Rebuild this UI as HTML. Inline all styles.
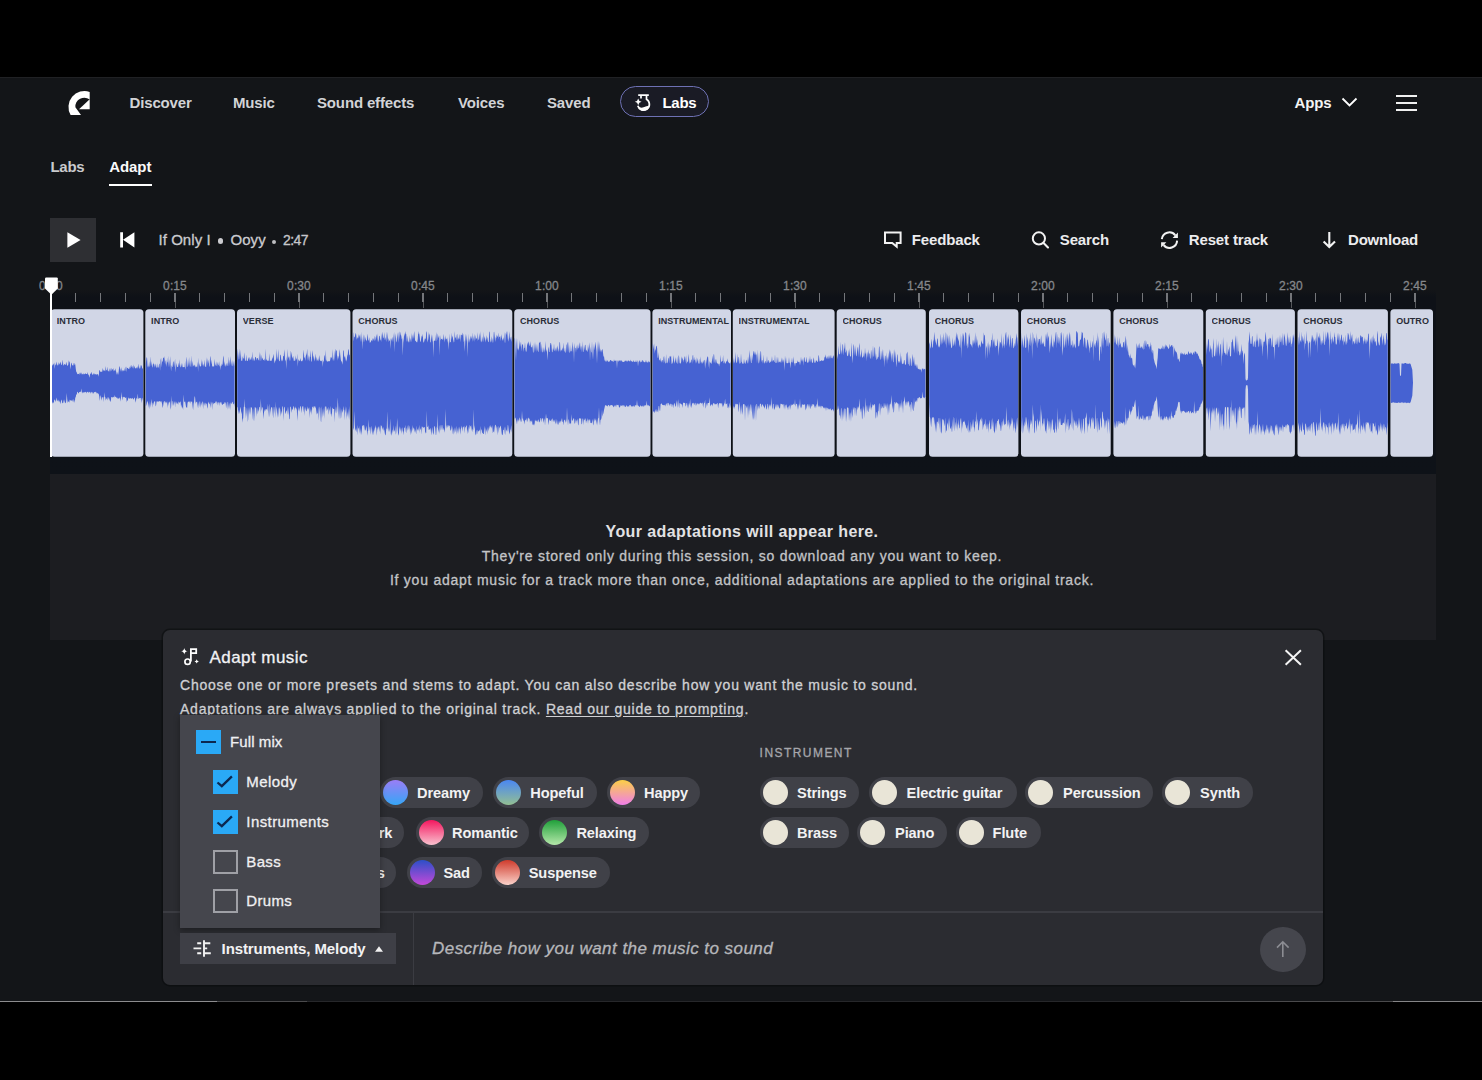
<!DOCTYPE html>
<html><head><meta charset="utf-8"><style>
html,body{margin:0;padding:0;width:1482px;height:1080px;overflow:hidden;background:#000}
body{position:relative;font-family:"Liberation Sans",sans-serif}
.screen{position:absolute;left:0;top:77px;width:1482px;height:924px;background:#131518}
.t{position:absolute;white-space:nowrap}
.m{-webkit-text-stroke:0.3px currentColor}
</style></head><body>
<div class="screen"></div><div style="position:absolute;left:0;top:77px;width:1482px;height:1px;background:#202124"></div><svg style="position:absolute;left:60px;top:85px" width="40" height="35" viewBox="0 0 40 35">
<path fill="#fff" d="M29.7 6.9 A16 16 0 0 0 10.6 30 L21 30 L15.4 22.3 A9 9 0 0 1 29.7 14.5 Z"/>
<path fill="#fff" d="M29.7 14.2 L19 24.2 L29.7 24.2 Z"/>
</svg><div class="t" style="left:129.5px;top:94.70px;font-size:15px;line-height:15px;font-weight:700;color:#d2d3d6;letter-spacing:-0.15px;font-style:normal;">Discover</div><div class="t" style="left:233px;top:94.70px;font-size:15px;line-height:15px;font-weight:700;color:#d2d3d6;letter-spacing:-0.15px;font-style:normal;">Music</div><div class="t" style="left:317px;top:94.70px;font-size:15px;line-height:15px;font-weight:700;color:#d2d3d6;letter-spacing:-0.15px;font-style:normal;">Sound effects</div><div class="t" style="left:458px;top:94.70px;font-size:15px;line-height:15px;font-weight:700;color:#d2d3d6;letter-spacing:-0.15px;font-style:normal;">Voices</div><div class="t" style="left:547px;top:94.70px;font-size:15px;line-height:15px;font-weight:700;color:#d2d3d6;letter-spacing:-0.15px;font-style:normal;">Saved</div><div style="position:absolute;left:619.5px;top:86.4px;width:87px;height:28.6px;border:1.7px solid #6e71b4;border-radius:17px;background:#1a1b25"></div><svg style="position:absolute;left:630px;top:90px" width="26" height="26" viewBox="0 0 26 26">
<path fill="none" stroke="#fff" stroke-width="1.7" d="M8.2 5.2 H18.8 M11 5.2 V8.4 M16.5 5.2 V9.2 A5.9 5.9 0 1 1 7.8 15.8"/>
<path fill="#fff" d="M7.8 15.9 Q10.5 18.4 13.5 17.3 Q16.5 16.2 19.4 15.8 A5.9 5.9 0 0 1 7.8 15.9 Z"/>
<path fill="#fff" d="M8.2 8.4 Q8.7 11.3 11.6 11.8 Q8.7 12.3 8.2 15.2 Q7.7 12.3 4.8 11.8 Q7.7 11.3 8.2 8.4 Z"/>
</svg><div class="t" style="left:662.5px;top:94.70px;font-size:15px;line-height:15px;font-weight:700;color:#fff;letter-spacing:-0.3px;font-style:normal;">Labs</div><div class="t" style="left:1294.5px;top:94.70px;font-size:15px;line-height:15px;font-weight:700;color:#f4f4f4;letter-spacing:-0.1px;font-style:normal;">Apps</div><svg style="position:absolute;left:1340px;top:95px" width="20" height="14" viewBox="0 0 20 14">
<path fill="none" stroke="#fff" stroke-width="1.8" d="M2.5 3.5 L9.5 10.5 L16.5 3.5"/></svg><div style="position:absolute;left:1395.5px;top:95.2px;width:21px;height:2px;background:#f0f0f0"></div><div style="position:absolute;left:1395.5px;top:102.2px;width:21px;height:2px;background:#f0f0f0"></div><div style="position:absolute;left:1395.5px;top:109.0px;width:21px;height:2px;background:#f0f0f0"></div><div class="t" style="left:50.5px;top:158.80px;font-size:15px;line-height:15px;font-weight:700;color:#c9cacd;letter-spacing:-0.3px;font-style:normal;">Labs</div><div class="t" style="left:109.3px;top:158.80px;font-size:15px;line-height:15px;font-weight:700;color:#fafafa;letter-spacing:-0.1px;font-style:normal;">Adapt</div><div style="position:absolute;left:109px;top:184px;width:43px;height:2.2px;background:#fff"></div><div style="position:absolute;left:50px;top:218px;width:46px;height:44px;background:#2e2f33"></div><svg style="position:absolute;left:60px;top:226px" width="28" height="28" viewBox="0 0 28 28">
<path fill="#fff" d="M7.4 6.3 L20.6 14 L7.4 21.8 Z"/></svg><svg style="position:absolute;left:112px;top:226px" width="28" height="28" viewBox="0 0 28 28">
<path fill="#fff" d="M8.2 6.3 H11 V21.4 H8.2 Z M11 13.85 L22.4 6.3 V21.4 Z"/></svg><div class="t m" style="left:158.5px;top:231.90px;font-size:15px;line-height:15px;font-weight:400;color:#cbcbcf;letter-spacing:0.05px;font-style:normal;">If Only I</div><div style="position:absolute;left:217.5px;top:238px;width:5.5px;height:5.5px;border-radius:50%;background:#cbcbcf"></div><div class="t m" style="left:230.5px;top:231.90px;font-size:15px;line-height:15px;font-weight:400;color:#cbcbcf;letter-spacing:0.05px;font-style:normal;">Ooyy</div><div style="position:absolute;left:271.5px;top:239.5px;width:4.5px;height:4.5px;border-radius:50%;background:#bdbdc1"></div><div class="t m" style="left:283px;top:232.95px;font-size:14px;line-height:14px;font-weight:400;color:#c6c6ca;letter-spacing:-0.6px;font-style:normal;">2:47</div><svg style="position:absolute;left:878px;top:226px" width="28" height="28" viewBox="0 0 28 28">
<path fill="none" stroke="#f2f2f2" stroke-width="2" stroke-linejoin="miter" d="M7 6.4 H22.6 V16.9 H18.7 V20.6 L14.2 16.9 H7 Z"/></svg><div class="t" style="left:911.8px;top:232.30px;font-size:15px;line-height:15px;font-weight:700;color:#ececee;letter-spacing:-0.15px;font-style:normal;">Feedback</div><svg style="position:absolute;left:1026px;top:226px" width="28" height="28" viewBox="0 0 28 28">
<circle cx="12.9" cy="12.4" r="6.1" fill="none" stroke="#f2f2f2" stroke-width="2"/>
<path d="M17.3 16.8 L22 21.5" stroke="#f2f2f2" stroke-width="2.1" stroke-linecap="round"/></svg><div class="t" style="left:1059.8px;top:232.30px;font-size:15px;line-height:15px;font-weight:700;color:#ececee;letter-spacing:-0.15px;font-style:normal;">Search</div><svg style="position:absolute;left:1155px;top:226px" width="28" height="28" viewBox="0 0 28 28">
<path fill="none" stroke="#f2f2f2" stroke-width="2" d="M6.8 13.2 A7.6 7.6 0 0 1 20.3 9.3 M22.1 14.6 A7.6 7.6 0 0 1 8.6 19"/>
<path fill="#f2f2f2" d="M22.9 6.6 V11.9 H17.6 Z M6.1 21.6 V16.3 H11.4 Z"/></svg><div class="t" style="left:1188.8px;top:232.30px;font-size:15px;line-height:15px;font-weight:700;color:#ececee;letter-spacing:-0.15px;font-style:normal;">Reset track</div><svg style="position:absolute;left:1315px;top:226px" width="28" height="28" viewBox="0 0 28 28">
<path fill="none" stroke="#f2f2f2" d="M14.3 6 V21 M8.6 15.4 L14.3 21.1 L20 15.4" stroke-width="2.1"/></svg><div class="t" style="left:1348px;top:232.30px;font-size:15px;line-height:15px;font-weight:700;color:#ececee;letter-spacing:-0.2px;font-style:normal;">Download</div><div style="position:absolute;left:50px;top:290px;width:1386px;height:184px;background:linear-gradient(180deg,#131518 0px,#0e1117 7px,#0e1218 100%)"></div><div class="t m" style="left:-449.0px;width:1000px;text-align:center;top:280.14px;font-size:12px;line-height:12px;font-weight:400;color:#85878b;letter-spacing:0.1px;">0:00</div><div class="t m" style="left:-325.0px;width:1000px;text-align:center;top:280.14px;font-size:12px;line-height:12px;font-weight:400;color:#85878b;letter-spacing:0.1px;">0:15</div><div class="t m" style="left:-201.0px;width:1000px;text-align:center;top:280.14px;font-size:12px;line-height:12px;font-weight:400;color:#85878b;letter-spacing:0.1px;">0:30</div><div class="t m" style="left:-77.0px;width:1000px;text-align:center;top:280.14px;font-size:12px;line-height:12px;font-weight:400;color:#85878b;letter-spacing:0.1px;">0:45</div><div class="t m" style="left:47.0px;width:1000px;text-align:center;top:280.14px;font-size:12px;line-height:12px;font-weight:400;color:#85878b;letter-spacing:0.1px;">1:00</div><div class="t m" style="left:171.0px;width:1000px;text-align:center;top:280.14px;font-size:12px;line-height:12px;font-weight:400;color:#85878b;letter-spacing:0.1px;">1:15</div><div class="t m" style="left:295.0px;width:1000px;text-align:center;top:280.14px;font-size:12px;line-height:12px;font-weight:400;color:#85878b;letter-spacing:0.1px;">1:30</div><div class="t m" style="left:419.0px;width:1000px;text-align:center;top:280.14px;font-size:12px;line-height:12px;font-weight:400;color:#85878b;letter-spacing:0.1px;">1:45</div><div class="t m" style="left:543.0px;width:1000px;text-align:center;top:280.14px;font-size:12px;line-height:12px;font-weight:400;color:#85878b;letter-spacing:0.1px;">2:00</div><div class="t m" style="left:667.0px;width:1000px;text-align:center;top:280.14px;font-size:12px;line-height:12px;font-weight:400;color:#85878b;letter-spacing:0.1px;">2:15</div><div class="t m" style="left:791.0px;width:1000px;text-align:center;top:280.14px;font-size:12px;line-height:12px;font-weight:400;color:#85878b;letter-spacing:0.1px;">2:30</div><div class="t m" style="left:915.0px;width:1000px;text-align:center;top:280.14px;font-size:12px;line-height:12px;font-weight:400;color:#85878b;letter-spacing:0.1px;">2:45</div><div style="position:absolute;left:50.35px;top:293px;width:1.3px;height:9px;background:#74767a"></div><div style="position:absolute;left:50.50px;top:302px;width:1px;height:6px;background:#55575b"></div><div style="position:absolute;left:75.15px;top:293px;width:1.3px;height:9px;background:#74767a"></div><div style="position:absolute;left:99.95px;top:293px;width:1.3px;height:9px;background:#74767a"></div><div style="position:absolute;left:124.75px;top:293px;width:1.3px;height:9px;background:#74767a"></div><div style="position:absolute;left:149.55px;top:293px;width:1.3px;height:9px;background:#74767a"></div><div style="position:absolute;left:174.35px;top:293px;width:1.3px;height:9px;background:#74767a"></div><div style="position:absolute;left:174.50px;top:302px;width:1px;height:6px;background:#55575b"></div><div style="position:absolute;left:199.15px;top:293px;width:1.3px;height:9px;background:#74767a"></div><div style="position:absolute;left:223.95px;top:293px;width:1.3px;height:9px;background:#74767a"></div><div style="position:absolute;left:248.75px;top:293px;width:1.3px;height:9px;background:#74767a"></div><div style="position:absolute;left:273.55px;top:293px;width:1.3px;height:9px;background:#74767a"></div><div style="position:absolute;left:298.35px;top:293px;width:1.3px;height:9px;background:#74767a"></div><div style="position:absolute;left:298.50px;top:302px;width:1px;height:6px;background:#55575b"></div><div style="position:absolute;left:323.15px;top:293px;width:1.3px;height:9px;background:#74767a"></div><div style="position:absolute;left:347.95px;top:293px;width:1.3px;height:9px;background:#74767a"></div><div style="position:absolute;left:372.75px;top:293px;width:1.3px;height:9px;background:#74767a"></div><div style="position:absolute;left:397.55px;top:293px;width:1.3px;height:9px;background:#74767a"></div><div style="position:absolute;left:422.35px;top:293px;width:1.3px;height:9px;background:#74767a"></div><div style="position:absolute;left:422.50px;top:302px;width:1px;height:6px;background:#55575b"></div><div style="position:absolute;left:447.15px;top:293px;width:1.3px;height:9px;background:#74767a"></div><div style="position:absolute;left:471.95px;top:293px;width:1.3px;height:9px;background:#74767a"></div><div style="position:absolute;left:496.75px;top:293px;width:1.3px;height:9px;background:#74767a"></div><div style="position:absolute;left:521.55px;top:293px;width:1.3px;height:9px;background:#74767a"></div><div style="position:absolute;left:546.35px;top:293px;width:1.3px;height:9px;background:#74767a"></div><div style="position:absolute;left:546.50px;top:302px;width:1px;height:6px;background:#55575b"></div><div style="position:absolute;left:571.15px;top:293px;width:1.3px;height:9px;background:#74767a"></div><div style="position:absolute;left:595.95px;top:293px;width:1.3px;height:9px;background:#74767a"></div><div style="position:absolute;left:620.75px;top:293px;width:1.3px;height:9px;background:#74767a"></div><div style="position:absolute;left:645.55px;top:293px;width:1.3px;height:9px;background:#74767a"></div><div style="position:absolute;left:670.35px;top:293px;width:1.3px;height:9px;background:#74767a"></div><div style="position:absolute;left:670.50px;top:302px;width:1px;height:6px;background:#55575b"></div><div style="position:absolute;left:695.15px;top:293px;width:1.3px;height:9px;background:#74767a"></div><div style="position:absolute;left:719.95px;top:293px;width:1.3px;height:9px;background:#74767a"></div><div style="position:absolute;left:744.75px;top:293px;width:1.3px;height:9px;background:#74767a"></div><div style="position:absolute;left:769.55px;top:293px;width:1.3px;height:9px;background:#74767a"></div><div style="position:absolute;left:794.35px;top:293px;width:1.3px;height:9px;background:#74767a"></div><div style="position:absolute;left:794.50px;top:302px;width:1px;height:6px;background:#55575b"></div><div style="position:absolute;left:819.15px;top:293px;width:1.3px;height:9px;background:#74767a"></div><div style="position:absolute;left:843.95px;top:293px;width:1.3px;height:9px;background:#74767a"></div><div style="position:absolute;left:868.75px;top:293px;width:1.3px;height:9px;background:#74767a"></div><div style="position:absolute;left:893.55px;top:293px;width:1.3px;height:9px;background:#74767a"></div><div style="position:absolute;left:918.35px;top:293px;width:1.3px;height:9px;background:#74767a"></div><div style="position:absolute;left:918.50px;top:302px;width:1px;height:6px;background:#55575b"></div><div style="position:absolute;left:943.15px;top:293px;width:1.3px;height:9px;background:#74767a"></div><div style="position:absolute;left:967.95px;top:293px;width:1.3px;height:9px;background:#74767a"></div><div style="position:absolute;left:992.75px;top:293px;width:1.3px;height:9px;background:#74767a"></div><div style="position:absolute;left:1017.55px;top:293px;width:1.3px;height:9px;background:#74767a"></div><div style="position:absolute;left:1042.35px;top:293px;width:1.3px;height:9px;background:#74767a"></div><div style="position:absolute;left:1042.50px;top:302px;width:1px;height:6px;background:#55575b"></div><div style="position:absolute;left:1067.15px;top:293px;width:1.3px;height:9px;background:#74767a"></div><div style="position:absolute;left:1091.95px;top:293px;width:1.3px;height:9px;background:#74767a"></div><div style="position:absolute;left:1116.75px;top:293px;width:1.3px;height:9px;background:#74767a"></div><div style="position:absolute;left:1141.55px;top:293px;width:1.3px;height:9px;background:#74767a"></div><div style="position:absolute;left:1166.35px;top:293px;width:1.3px;height:9px;background:#74767a"></div><div style="position:absolute;left:1166.50px;top:302px;width:1px;height:6px;background:#55575b"></div><div style="position:absolute;left:1191.15px;top:293px;width:1.3px;height:9px;background:#74767a"></div><div style="position:absolute;left:1215.95px;top:293px;width:1.3px;height:9px;background:#74767a"></div><div style="position:absolute;left:1240.75px;top:293px;width:1.3px;height:9px;background:#74767a"></div><div style="position:absolute;left:1265.55px;top:293px;width:1.3px;height:9px;background:#74767a"></div><div style="position:absolute;left:1290.35px;top:293px;width:1.3px;height:9px;background:#74767a"></div><div style="position:absolute;left:1290.50px;top:302px;width:1px;height:6px;background:#55575b"></div><div style="position:absolute;left:1315.15px;top:293px;width:1.3px;height:9px;background:#74767a"></div><div style="position:absolute;left:1339.95px;top:293px;width:1.3px;height:9px;background:#74767a"></div><div style="position:absolute;left:1364.75px;top:293px;width:1.3px;height:9px;background:#74767a"></div><div style="position:absolute;left:1389.55px;top:293px;width:1.3px;height:9px;background:#74767a"></div><div style="position:absolute;left:1414.35px;top:293px;width:1.3px;height:9px;background:#74767a"></div><div style="position:absolute;left:1414.50px;top:302px;width:1px;height:6px;background:#55575b"></div><svg style="position:absolute;left:0;top:0" width="1482" height="1080" viewBox="0 0 1482 1080"><defs><clipPath id="c0"><rect x="51.0" y="309.3" width="92.4" height="147.4" rx="3.5"/></clipPath><clipPath id="c1"><rect x="145.3" y="309.3" width="89.7" height="147.4" rx="3.5"/></clipPath><clipPath id="c2"><rect x="237.0" y="309.3" width="113.4" height="147.4" rx="3.5"/></clipPath><clipPath id="c3"><rect x="352.5" y="309.3" width="159.8" height="147.4" rx="3.5"/></clipPath><clipPath id="c4"><rect x="514.2" y="309.3" width="136.3" height="147.4" rx="3.5"/></clipPath><clipPath id="c5"><rect x="652.4" y="309.3" width="78.6" height="147.4" rx="3.5"/></clipPath><clipPath id="c6"><rect x="732.8" y="309.3" width="101.8" height="147.4" rx="3.5"/></clipPath><clipPath id="c7"><rect x="836.7" y="309.3" width="89.1" height="147.4" rx="3.5"/></clipPath><clipPath id="c8"><rect x="929.0" y="309.3" width="89.4" height="147.4" rx="3.5"/></clipPath><clipPath id="c9"><rect x="1021.0" y="309.3" width="89.7" height="147.4" rx="3.5"/></clipPath><clipPath id="c10"><rect x="1113.4" y="309.3" width="89.9" height="147.4" rx="3.5"/></clipPath><clipPath id="c11"><rect x="1205.8" y="309.3" width="89.1" height="147.4" rx="3.5"/></clipPath><clipPath id="c12"><rect x="1297.5" y="309.3" width="90.4" height="147.4" rx="3.5"/></clipPath><clipPath id="c13"><rect x="1390.4" y="309.3" width="42.6" height="147.4" rx="3.5"/></clipPath></defs><rect x="51.0" y="309.3" width="92.4" height="147.4" rx="3.5" fill="#d1d6e6"/><path clip-path="url(#c0)" fill="#4662d2" d="M51.2,361.3 51.8,365.8 52.2,365.8 52.8,364.5 53.2,364.7 53.8,363.7 54.2,362.6 54.8,368.9 55.2,364.5 55.8,365.1 56.2,361.5 56.8,364.1 57.2,365.8 57.8,364.7 58.2,362.1 58.8,365.5 59.2,363.1 59.8,364.8 60.2,363.3 60.8,361.5 61.2,364.7 61.8,365.1 62.2,363.2 62.8,359.4 63.2,364.7 63.8,365.7 64.2,363.8 64.8,364.5 65.2,365.1 65.8,364.5 66.2,361.8 66.8,364.2 67.2,365.7 67.8,365.5 68.2,365.0 68.8,360.3 69.2,361.6 69.8,362.5 70.2,365.8 70.8,369.6 71.2,362.5 71.8,363.5 72.2,365.6 72.8,365.3 73.2,365.8 73.8,362.9 74.2,363.0 74.8,365.3 75.2,363.9 75.8,369.1 76.2,371.4 76.8,372.5 77.2,373.7 77.8,374.3 78.2,374.0 78.8,374.1 79.2,372.5 79.8,374.8 80.2,373.9 80.8,372.3 81.2,374.8 81.8,372.2 82.2,374.6 82.8,374.0 83.2,373.3 83.8,374.4 84.2,374.2 84.8,374.0 85.2,372.9 85.8,374.1 86.2,374.1 86.8,374.0 87.2,374.3 87.8,372.1 88.2,374.7 88.8,374.7 89.2,377.7 89.8,375.8 90.2,373.8 90.8,373.8 91.2,371.8 91.8,373.5 92.2,374.5 92.8,374.7 93.2,374.6 93.8,372.9 94.2,374.8 94.8,373.2 95.2,374.5 95.8,373.9 96.2,374.7 96.8,374.2 97.2,374.4 97.8,374.1 98.2,374.4 98.8,376.7 99.2,370.2 99.8,370.2 100.2,371.8 100.8,371.7 101.2,371.8 101.8,371.7 102.2,371.7 102.8,367.8 103.2,371.2 103.8,369.6 104.2,370.3 104.8,370.9 105.2,371.3 105.8,365.9 106.2,370.1 106.8,370.3 107.2,371.0 107.8,366.4 108.2,371.8 108.8,370.8 109.2,371.8 109.8,367.9 110.2,371.8 110.8,368.4 111.2,368.1 111.8,371.2 112.2,369.5 112.8,369.3 113.2,368.0 113.8,371.5 114.2,370.0 114.8,370.9 115.2,368.2 115.8,370.8 116.2,371.7 116.8,374.5 117.2,374.5 117.8,371.8 118.2,374.9 118.8,370.4 119.2,366.1 119.8,367.2 120.2,371.8 120.8,368.0 121.2,371.8 121.8,366.9 122.2,371.8 122.8,370.1 123.2,370.1 123.8,371.2 124.2,371.0 124.8,368.8 125.2,366.6 125.8,370.8 126.2,371.8 126.8,366.6 127.2,368.0 127.8,367.9 128.2,368.7 128.8,368.8 129.2,369.3 129.8,366.5 130.2,368.6 130.8,365.7 131.2,364.9 131.8,367.5 132.2,365.8 132.8,368.6 133.2,364.2 133.8,368.7 134.2,367.5 134.8,365.8 135.2,368.8 135.8,367.9 136.2,368.6 136.8,367.3 137.2,366.3 137.8,368.7 138.2,367.2 138.8,363.5 139.2,368.8 139.8,368.3 140.2,364.6 140.8,368.8 141.2,366.1 141.8,365.1 142.2,368.8 142.8,368.1 143.2,371.3 143.2,393.6 142.8,400.9 142.2,397.8 141.8,398.4 141.2,403.3 140.8,398.3 140.2,397.8 139.8,398.6 139.2,397.8 138.8,398.8 138.2,398.6 137.8,393.5 137.2,399.2 136.8,397.8 136.2,399.3 135.8,402.8 135.2,400.3 134.8,397.8 134.2,397.8 133.8,399.3 133.2,399.4 132.8,397.8 132.2,398.6 131.8,398.2 131.2,399.1 130.8,397.9 130.2,398.4 129.8,398.1 129.2,399.1 128.8,398.6 128.2,397.2 127.8,401.3 127.2,400.0 126.8,402.6 126.2,396.9 125.8,397.9 125.2,397.7 124.8,396.8 124.2,397.6 123.8,396.8 123.2,396.9 122.8,400.6 122.2,396.8 121.8,397.0 121.2,392.0 120.8,401.8 120.2,398.8 119.8,397.2 119.2,398.5 118.8,399.2 118.2,397.8 117.8,399.0 117.2,397.6 116.8,397.7 116.2,397.5 115.8,396.8 115.2,396.8 114.8,397.6 114.2,395.1 113.8,397.3 113.2,397.1 112.8,397.7 112.2,397.0 111.8,397.0 111.2,397.2 110.8,402.0 110.2,401.0 109.8,398.1 109.2,401.3 108.8,396.8 108.2,398.7 107.8,400.5 107.2,396.8 106.8,399.5 106.2,398.0 105.8,400.7 105.2,397.0 104.8,397.1 104.2,392.3 103.8,402.2 103.2,396.8 102.8,397.5 102.2,396.9 101.8,400.7 101.2,397.8 100.8,395.0 100.2,397.2 99.8,401.0 99.2,395.9 98.8,394.2 98.2,393.5 97.8,393.5 97.2,392.9 96.8,392.0 96.2,393.7 95.8,392.0 95.2,391.8 94.8,391.9 94.2,392.3 93.8,392.5 93.2,393.8 92.8,393.4 92.2,391.8 91.8,392.7 91.2,391.8 90.8,392.0 90.2,393.7 89.8,391.9 89.2,391.8 88.8,393.2 88.2,391.8 87.8,391.9 87.2,391.8 86.8,392.0 86.2,393.4 85.8,391.8 85.2,392.0 84.8,392.5 84.2,392.1 83.8,393.0 83.2,392.0 82.8,392.1 82.2,393.6 81.8,391.9 81.2,388.6 80.8,392.1 80.2,391.8 79.8,391.9 79.2,392.1 78.8,393.6 78.2,393.0 77.8,392.0 77.2,391.8 76.8,394.6 76.2,394.6 75.8,396.7 75.2,398.1 74.8,403.1 74.2,400.3 73.8,398.9 73.2,402.6 72.8,399.2 72.2,401.7 71.8,400.5 71.2,400.5 70.8,400.2 70.2,400.4 69.8,399.5 69.2,402.8 68.8,401.6 68.2,401.4 67.8,403.0 67.2,399.3 66.8,393.1 66.2,400.9 65.8,402.9 65.2,403.2 64.8,399.2 64.2,403.0 63.8,399.6 63.2,403.0 62.8,402.7 62.2,403.6 61.8,399.4 61.2,400.5 60.8,401.9 60.2,404.3 59.8,400.2 59.2,402.6 58.8,399.5 58.2,401.8 57.8,401.1 57.2,400.2 56.8,397.6 56.2,400.1 55.8,402.0 55.2,400.2 54.8,399.6 54.2,399.9 53.8,403.6 53.2,402.0 52.8,403.8 52.2,401.9 51.8,400.6 51.2,401.1Z"/><rect x="145.3" y="309.3" width="89.7" height="147.4" rx="3.5" fill="#d1d6e6"/><path clip-path="url(#c1)" fill="#4662d2" d="M145.6,363.9 146.1,361.3 146.6,357.1 147.1,358.2 147.6,367.5 148.1,365.5 148.6,367.8 149.1,361.2 149.6,367.1 150.1,365.9 150.6,356.3 151.1,365.9 151.6,361.1 152.1,367.7 152.6,366.5 153.1,362.6 153.6,364.5 154.1,363.7 154.6,367.7 155.1,363.4 155.6,365.3 156.1,367.6 156.6,367.7 157.1,363.3 157.6,367.4 158.1,367.5 158.6,367.6 159.1,363.5 159.6,364.2 160.1,370.7 160.6,360.1 161.1,357.8 161.6,367.6 162.1,361.0 162.6,362.1 163.1,358.1 163.6,358.0 164.1,356.3 164.6,359.4 165.1,364.7 165.6,361.1 166.1,359.9 166.6,367.0 167.1,362.5 167.6,361.7 168.1,356.0 168.6,367.5 169.1,359.6 169.6,367.2 170.1,356.0 170.6,364.7 171.1,371.5 171.6,365.1 172.1,367.3 172.6,366.4 173.1,360.9 173.6,362.2 174.1,367.3 174.6,363.0 175.1,358.7 175.6,372.6 176.1,367.1 176.6,362.8 177.1,366.8 177.6,367.1 178.1,367.0 178.6,362.5 179.1,366.3 179.6,359.3 180.1,367.2 180.6,367.2 181.1,362.7 181.6,366.9 182.1,363.3 182.6,367.3 183.1,367.1 183.6,367.3 184.1,367.0 184.6,367.3 185.1,360.8 185.6,370.0 186.1,366.9 186.6,356.6 187.1,360.6 187.6,367.2 188.1,365.7 188.6,362.4 189.1,357.0 189.6,366.9 190.1,359.9 190.6,365.9 191.1,367.3 191.6,355.3 192.1,367.2 192.6,360.8 193.1,364.7 193.6,366.1 194.1,366.5 194.6,364.6 195.1,365.5 195.6,367.2 196.1,367.2 196.6,366.3 197.1,367.1 197.6,361.6 198.1,372.0 198.6,357.4 199.1,366.8 199.6,363.0 200.1,367.0 200.6,366.0 201.1,366.3 201.6,359.1 202.1,365.9 202.6,360.3 203.1,366.9 203.6,363.7 204.1,366.5 204.6,359.6 205.1,365.9 205.6,367.0 206.1,367.0 206.6,357.1 207.1,366.1 207.6,358.0 208.1,363.4 208.6,359.4 209.1,365.8 209.6,367.1 210.1,355.8 210.6,358.1 211.1,364.2 211.6,359.6 212.1,365.7 212.6,366.6 213.1,366.9 213.6,366.1 214.1,366.4 214.6,358.8 215.1,364.6 215.6,366.0 216.1,361.3 216.6,365.4 217.1,366.4 217.6,361.7 218.1,365.5 218.6,364.8 219.1,361.3 219.6,366.7 220.1,365.5 220.6,370.2 221.1,363.2 221.6,366.5 222.1,365.1 222.6,364.1 223.1,357.5 223.6,355.4 224.1,366.6 224.6,360.9 225.1,364.9 225.6,366.9 226.1,362.7 226.6,366.5 227.1,362.3 227.6,365.6 228.1,366.3 228.6,356.3 229.1,366.2 229.6,359.5 230.1,365.0 230.6,355.9 231.1,361.6 231.6,366.4 232.1,359.9 232.6,365.8 233.1,366.6 233.6,360.8 234.1,366.0 234.6,360.2 234.6,407.3 234.1,403.1 233.6,404.3 233.1,404.2 232.6,401.8 232.1,401.9 231.6,403.4 231.1,404.0 230.6,402.3 230.1,410.1 229.6,406.2 229.1,402.7 228.6,409.2 228.1,402.3 227.6,401.7 227.1,410.0 226.6,401.9 226.1,408.6 225.6,401.7 225.1,403.2 224.6,401.7 224.1,404.2 223.6,403.7 223.1,403.8 222.6,404.7 222.1,404.9 221.6,403.4 221.1,401.7 220.6,401.9 220.1,403.4 219.6,401.9 219.1,406.0 218.6,401.7 218.1,402.7 217.6,402.3 217.1,405.4 216.6,401.6 216.1,401.6 215.6,401.6 215.1,403.3 214.6,403.0 214.1,403.2 213.6,404.4 213.1,402.6 212.6,402.6 212.1,409.9 211.6,401.5 211.1,403.7 210.6,408.3 210.1,401.5 209.6,404.4 209.1,403.7 208.6,402.7 208.1,401.5 207.6,408.8 207.1,406.9 206.6,403.2 206.1,404.1 205.6,402.6 205.1,405.9 204.6,402.2 204.1,405.9 203.6,402.0 203.1,409.2 202.6,401.8 202.1,401.5 201.6,405.7 201.1,402.3 200.6,408.0 200.1,401.4 199.6,401.6 199.1,407.0 198.6,402.0 198.1,408.4 197.6,405.5 197.1,401.6 196.6,402.5 196.1,401.5 195.6,404.1 195.1,397.5 194.6,396.0 194.1,401.4 193.6,403.7 193.1,410.2 192.6,406.5 192.1,401.4 191.6,402.0 191.1,401.3 190.6,401.6 190.1,403.8 189.6,401.5 189.1,401.6 188.6,401.4 188.1,402.1 187.6,402.5 187.1,408.1 186.6,407.3 186.1,407.6 185.6,404.0 185.1,401.3 184.6,402.3 184.1,401.3 183.6,394.5 183.1,409.9 182.6,407.4 182.1,407.6 181.6,404.3 181.1,408.1 180.6,401.2 180.1,402.0 179.6,403.1 179.1,402.1 178.6,401.4 178.1,404.9 177.6,402.5 177.1,404.3 176.6,401.5 176.1,404.2 175.6,401.1 175.1,407.4 174.6,401.1 174.1,403.1 173.6,406.0 173.1,401.4 172.6,401.1 172.1,406.2 171.6,395.7 171.1,407.3 170.6,409.8 170.1,401.1 169.6,403.1 169.1,401.2 168.6,406.0 168.1,401.5 167.6,408.2 167.1,401.2 166.6,403.5 166.1,401.6 165.6,401.7 165.1,403.5 164.6,401.2 164.1,401.1 163.6,402.4 163.1,405.9 162.6,407.9 162.1,404.0 161.6,402.1 161.1,401.0 160.6,401.2 160.1,402.3 159.6,401.0 159.1,401.0 158.6,401.9 158.1,401.3 157.6,401.8 157.1,401.2 156.6,401.5 156.1,405.3 155.6,406.4 155.1,401.2 154.6,401.8 154.1,400.9 153.6,405.3 153.1,402.3 152.6,403.4 152.1,407.7 151.6,399.0 151.1,402.2 150.6,407.8 150.1,401.7 149.6,409.7 149.1,400.9 148.6,408.0 148.1,403.6 147.6,401.5 147.1,401.2 146.6,403.9 146.1,405.7 145.6,406.1Z"/><rect x="237.0" y="309.3" width="113.4" height="147.4" rx="3.5" fill="#d1d6e6"/><path clip-path="url(#c2)" fill="#4662d2" d="M237.2,358.1 237.8,348.4 238.2,353.8 238.8,359.5 239.2,359.1 239.8,348.3 240.2,359.2 240.8,349.6 241.2,360.8 241.8,360.7 242.2,360.8 242.8,356.1 243.2,358.9 243.8,357.8 244.2,352.3 244.8,358.6 245.2,360.7 245.8,360.9 246.2,354.6 246.8,360.8 247.2,360.9 247.8,360.8 248.2,358.9 248.8,357.0 249.2,360.9 249.8,356.4 250.2,360.3 250.8,359.1 251.2,356.4 251.8,360.3 252.2,351.3 252.8,360.9 253.2,357.4 253.8,360.4 254.2,360.9 254.8,359.5 255.2,356.7 255.8,357.3 256.2,358.0 256.8,360.6 257.2,358.1 257.8,358.1 258.2,359.8 258.8,360.6 259.2,351.5 259.8,360.4 260.2,360.9 260.8,352.9 261.2,361.0 261.8,354.4 262.2,359.4 262.8,357.4 263.2,360.1 263.8,359.9 264.2,360.9 264.8,358.3 265.2,360.9 265.8,348.5 266.2,360.5 266.8,359.1 267.2,361.0 267.8,360.6 268.2,360.4 268.8,360.9 269.2,353.2 269.8,361.1 270.2,360.9 270.8,360.4 271.2,361.1 271.8,360.2 272.2,356.9 272.8,359.5 273.2,353.8 273.8,356.7 274.2,361.1 274.8,363.5 275.2,361.0 275.8,360.3 276.2,358.2 276.8,348.8 277.2,360.0 277.8,356.5 278.2,349.0 278.8,359.3 279.2,361.0 279.8,361.2 280.2,355.3 280.8,354.5 281.2,359.2 281.8,361.2 282.2,361.2 282.8,359.4 283.2,356.1 283.8,356.0 284.2,349.2 284.8,355.2 285.2,361.2 285.8,359.4 286.2,369.3 286.8,356.3 287.2,360.5 287.8,348.8 288.2,358.6 288.8,356.6 289.2,356.6 289.8,360.7 290.2,360.4 290.8,350.7 291.2,352.6 291.8,355.3 292.2,358.8 292.8,356.7 293.2,356.1 293.8,361.0 294.2,360.4 294.8,361.3 295.2,355.3 295.8,361.1 296.2,357.9 296.8,360.0 297.2,353.6 297.8,366.8 298.2,361.1 298.8,359.1 299.2,361.3 299.8,360.8 300.2,358.1 300.8,360.6 301.2,361.3 301.8,361.3 302.2,359.9 302.8,361.4 303.2,355.0 303.8,349.6 304.2,357.7 304.8,357.2 305.2,361.0 305.8,356.1 306.2,354.9 306.8,353.0 307.2,348.5 307.8,361.0 308.2,354.8 308.8,359.7 309.2,361.4 309.8,356.2 310.2,357.3 310.8,350.0 311.2,361.4 311.8,361.4 312.2,354.5 312.8,350.1 313.2,359.3 313.8,355.3 314.2,358.5 314.8,361.5 315.2,358.3 315.8,353.6 316.2,361.4 316.8,356.7 317.2,359.6 317.8,360.8 318.2,361.3 318.8,358.4 319.2,355.0 319.8,359.6 320.2,361.3 320.8,360.6 321.2,360.8 321.8,361.5 322.2,359.6 322.8,366.9 323.2,361.2 323.8,361.6 324.2,356.4 324.8,354.8 325.2,361.3 325.8,349.7 326.2,359.8 326.8,361.2 327.2,361.6 327.8,361.6 328.2,361.6 328.8,361.1 329.2,361.0 329.8,361.5 330.2,360.1 330.8,356.8 331.2,358.2 331.8,356.4 332.2,360.8 332.8,348.9 333.2,358.4 333.8,361.3 334.2,350.3 334.8,361.3 335.2,353.8 335.8,348.7 336.2,350.5 336.8,350.8 337.2,360.8 337.8,355.5 338.2,356.0 338.8,359.0 339.2,354.0 339.8,349.1 340.2,354.4 340.8,359.5 341.2,361.3 341.8,361.4 342.2,364.8 342.8,361.4 343.2,350.6 343.8,350.4 344.2,357.6 344.8,355.8 345.2,361.2 345.8,356.0 346.2,361.8 346.8,359.6 347.2,356.0 347.8,354.2 348.2,350.1 348.8,348.9 349.2,355.6 349.8,354.2 350.2,361.3 350.2,422.7 349.8,417.7 349.2,405.9 348.8,419.0 348.2,408.4 347.8,417.2 347.2,411.2 346.8,420.1 346.2,406.4 345.8,413.2 345.2,405.9 344.8,420.6 344.2,409.5 343.8,410.5 343.2,405.9 342.8,410.7 342.2,413.1 341.8,408.8 341.2,417.2 340.8,418.7 340.2,407.2 339.8,419.8 339.2,406.0 338.8,419.0 338.2,406.2 337.8,397.3 337.2,411.0 336.8,413.8 336.2,406.4 335.8,413.4 335.2,406.0 334.8,422.4 334.2,409.0 333.8,409.1 333.2,409.0 332.8,407.5 332.2,409.1 331.8,417.3 331.2,413.2 330.8,414.4 330.2,406.1 329.8,408.9 329.2,411.0 328.8,415.0 328.2,406.7 327.8,408.4 327.2,410.1 326.8,410.9 326.2,406.6 325.8,406.4 325.2,406.4 324.8,419.1 324.2,406.2 323.8,416.7 323.2,407.5 322.8,418.0 322.2,410.3 321.8,406.3 321.2,422.1 320.8,421.3 320.2,408.2 319.8,406.6 319.2,412.3 318.8,420.7 318.2,406.8 317.8,412.7 317.2,413.7 316.8,414.6 316.2,410.4 315.8,406.1 315.2,408.6 314.8,407.1 314.2,406.1 313.8,406.2 313.2,408.6 312.8,406.9 312.2,406.5 311.8,415.3 311.2,409.0 310.8,413.0 310.2,408.3 309.8,418.2 309.2,407.0 308.8,410.1 308.2,407.4 307.8,409.7 307.2,406.2 306.8,410.4 306.2,411.6 305.8,409.8 305.2,406.8 304.8,416.0 304.2,406.9 303.8,412.5 303.2,406.2 302.8,406.2 302.2,406.8 301.8,413.2 301.2,408.5 300.8,406.3 300.2,406.2 299.8,412.1 299.2,407.4 298.8,411.3 298.2,406.4 297.8,413.2 297.2,420.9 296.8,407.6 296.2,410.0 295.8,406.3 295.2,408.4 294.8,407.3 294.2,411.1 293.8,406.4 293.2,406.3 292.8,410.3 292.2,408.4 291.8,412.9 291.2,409.1 290.8,406.5 290.2,406.9 289.8,418.4 289.2,419.6 288.8,406.4 288.2,415.6 287.8,406.4 287.2,414.7 286.8,411.3 286.2,410.3 285.8,412.4 285.2,414.3 284.8,407.7 284.2,406.5 283.8,409.2 283.2,421.0 282.8,406.4 282.2,406.4 281.8,414.7 281.2,410.7 280.8,416.7 280.2,409.8 279.8,407.1 279.2,409.2 278.8,417.8 278.2,407.1 277.8,412.2 277.2,418.0 276.8,406.5 276.2,409.8 275.8,417.9 275.2,401.6 274.8,414.0 274.2,407.0 273.8,407.2 273.2,418.6 272.8,414.6 272.2,407.5 271.8,407.0 271.2,407.4 270.8,409.1 270.2,412.7 269.8,417.4 269.2,403.8 268.8,406.9 268.2,417.3 267.8,403.6 267.2,410.9 266.8,408.8 266.2,409.5 265.8,411.1 265.2,408.7 264.8,409.8 264.2,411.5 263.8,413.4 263.2,419.3 262.8,407.2 262.2,407.4 261.8,410.9 261.2,406.6 260.8,398.7 260.2,413.5 259.8,407.2 259.2,406.8 258.8,410.1 258.2,411.6 257.8,414.4 257.2,406.8 256.8,417.0 256.2,408.4 255.8,406.8 255.2,408.4 254.8,406.7 254.2,422.0 253.8,407.8 253.2,420.9 252.8,418.5 252.2,409.7 251.8,406.8 251.2,408.1 250.8,406.9 250.2,414.9 249.8,406.9 249.2,414.7 248.8,407.3 248.2,419.2 247.8,422.1 247.2,407.2 246.8,417.1 246.2,408.5 245.8,406.7 245.2,418.9 244.8,398.8 244.2,406.9 243.8,406.7 243.2,418.2 242.8,418.7 242.2,422.8 241.8,411.1 241.2,414.3 240.8,406.8 240.2,408.8 239.8,410.7 239.2,414.1 238.8,409.5 238.2,414.5 237.8,407.7 237.2,406.8Z"/><rect x="352.5" y="309.3" width="159.8" height="147.4" rx="3.5" fill="#d1d6e6"/><path clip-path="url(#c3)" fill="#4662d2" d="M352.8,333.5 353.2,332.6 353.8,341.6 354.2,336.6 354.8,337.2 355.2,334.8 355.8,332.7 356.2,334.8 356.8,340.1 357.2,336.9 357.8,338.9 358.2,333.8 358.8,338.6 359.2,336.5 359.8,334.5 360.2,341.9 360.8,333.5 361.2,342.3 361.8,331.4 362.2,349.7 362.8,339.1 363.2,334.1 363.8,342.5 364.2,334.4 364.8,342.3 365.2,336.8 365.8,339.7 366.2,340.1 366.8,341.6 367.2,337.4 367.8,333.6 368.2,339.7 368.8,341.0 369.2,337.1 369.8,342.7 370.2,342.4 370.8,342.1 371.2,340.1 371.8,341.1 372.2,337.8 372.8,341.6 373.2,340.1 373.8,338.1 374.2,341.6 374.8,336.0 375.2,337.1 375.8,340.8 376.2,337.1 376.8,334.0 377.2,342.1 377.8,333.2 378.2,340.0 378.8,342.3 379.2,336.0 379.8,335.8 380.2,339.6 380.8,340.7 381.2,333.0 381.8,342.3 382.2,336.0 382.8,331.6 383.2,338.5 383.8,337.2 384.2,332.0 384.8,340.5 385.2,337.3 385.8,340.5 386.2,331.3 386.8,342.0 387.2,339.0 387.8,331.7 388.2,342.5 388.8,338.0 389.2,340.7 389.8,340.8 390.2,338.1 390.8,349.0 391.2,337.7 391.8,340.9 392.2,336.6 392.8,342.1 393.2,333.1 393.8,342.5 394.2,331.2 394.8,352.2 395.2,339.1 395.8,333.3 396.2,341.0 396.8,342.6 397.2,332.2 397.8,337.8 398.2,342.7 398.8,333.0 399.2,331.2 399.8,339.3 400.2,331.4 400.8,335.3 401.2,335.6 401.8,339.6 402.2,338.0 402.8,355.8 403.2,342.7 403.8,338.5 404.2,332.8 404.8,336.7 405.2,330.9 405.8,334.2 406.2,333.9 406.8,341.6 407.2,341.4 407.8,335.5 408.2,342.7 408.8,340.9 409.2,342.4 409.8,334.9 410.2,342.3 410.8,337.7 411.2,342.6 411.8,332.8 412.2,339.8 412.8,334.3 413.2,339.0 413.8,334.4 414.2,330.9 414.8,337.6 415.2,341.1 415.8,340.8 416.2,342.6 416.8,341.5 417.2,342.4 417.8,338.8 418.2,331.0 418.8,334.5 419.2,333.3 419.8,337.4 420.2,342.1 420.8,341.2 421.2,338.3 421.8,335.4 422.2,337.1 422.8,333.8 423.2,342.3 423.8,342.4 424.2,338.0 424.8,341.9 425.2,338.2 425.8,339.0 426.2,331.1 426.8,332.8 427.2,342.6 427.8,339.9 428.2,331.6 428.8,340.5 429.2,335.2 429.8,333.3 430.2,341.8 430.8,342.7 431.2,334.0 431.8,338.7 432.2,341.9 432.8,334.2 433.2,357.2 433.8,341.5 434.2,340.3 434.8,340.9 435.2,340.9 435.8,336.7 436.2,331.9 436.8,341.5 437.2,339.6 437.8,333.5 438.2,336.1 438.8,338.2 439.2,335.3 439.8,355.5 440.2,335.0 440.8,340.5 441.2,338.8 441.8,339.0 442.2,338.6 442.8,340.3 443.2,339.2 443.8,333.8 444.2,338.4 444.8,342.5 445.2,335.3 445.8,339.8 446.2,338.4 446.8,339.1 447.2,342.7 447.8,337.0 448.2,342.8 448.8,350.0 449.2,333.2 449.8,342.7 450.2,341.9 450.8,342.3 451.2,332.4 451.8,340.0 452.2,335.4 452.8,337.5 453.2,339.8 453.8,342.5 454.2,342.1 454.8,331.1 455.2,337.5 455.8,337.6 456.2,340.2 456.8,335.0 457.2,333.7 457.8,340.6 458.2,337.2 458.8,339.6 459.2,339.1 459.8,334.5 460.2,334.8 460.8,342.3 461.2,334.9 461.8,335.1 462.2,332.6 462.8,335.7 463.2,333.7 463.8,342.2 464.2,340.0 464.8,351.8 465.2,341.9 465.8,333.2 466.2,341.9 466.8,334.3 467.2,340.7 467.8,357.1 468.2,333.5 468.8,342.8 469.2,338.3 469.8,342.8 470.2,339.3 470.8,335.4 471.2,339.2 471.8,335.7 472.2,342.0 472.8,332.3 473.2,341.3 473.8,335.8 474.2,341.9 474.8,333.5 475.2,340.5 475.8,334.8 476.2,338.9 476.8,337.7 477.2,341.2 477.8,332.1 478.2,339.2 478.8,339.9 479.2,333.0 479.8,337.7 480.2,341.9 480.8,330.9 481.2,340.9 481.8,342.6 482.2,336.2 482.8,341.9 483.2,331.8 483.8,342.4 484.2,338.3 484.8,336.1 485.2,342.6 485.8,339.5 486.2,335.0 486.8,340.1 487.2,336.8 487.8,340.5 488.2,341.8 488.8,342.3 489.2,331.2 489.8,332.6 490.2,342.7 490.8,340.9 491.2,335.9 491.8,342.5 492.2,337.7 492.8,342.8 493.2,342.3 493.8,332.3 494.2,331.7 494.8,337.5 495.2,342.1 495.8,337.1 496.2,338.4 496.8,334.6 497.2,337.3 497.8,335.3 498.2,339.3 498.8,332.6 499.2,336.8 499.8,336.9 500.2,336.1 500.8,341.3 501.2,333.9 501.8,337.7 502.2,338.9 502.8,340.9 503.2,337.2 503.8,340.8 504.2,331.8 504.8,342.4 505.2,342.8 505.8,332.6 506.2,335.1 506.8,331.6 507.2,331.6 507.8,338.3 508.2,341.7 508.8,338.2 509.2,331.2 509.8,337.4 510.2,340.1 510.8,337.3 511.2,336.4 511.8,341.4 512.2,341.3 512.2,428.0 511.8,432.9 511.2,425.1 510.8,428.9 510.2,430.5 509.8,434.6 509.2,432.6 508.8,430.9 508.2,425.4 507.8,424.8 507.2,431.9 506.8,429.5 506.2,431.7 505.8,426.3 505.2,435.0 504.8,433.2 504.2,426.4 503.8,430.1 503.2,429.9 502.8,434.3 502.2,435.3 501.8,434.3 501.2,428.9 500.8,425.6 500.2,426.4 499.8,427.3 499.2,428.5 498.8,433.3 498.2,425.9 497.8,427.0 497.2,435.5 496.8,428.8 496.2,426.2 495.8,424.8 495.2,424.9 494.8,433.3 494.2,425.3 493.8,431.5 493.2,431.9 492.8,433.3 492.2,424.9 491.8,428.8 491.2,426.3 490.8,427.6 490.2,424.8 489.8,429.3 489.2,425.4 488.8,428.0 488.2,431.4 487.8,427.1 487.2,434.3 486.8,429.1 486.2,432.2 485.8,426.9 485.2,435.5 484.8,431.0 484.2,425.7 483.8,434.1 483.2,434.1 482.8,433.2 482.2,432.7 481.8,429.0 481.2,430.6 480.8,435.0 480.2,426.1 479.8,431.1 479.2,430.1 478.8,431.2 478.2,431.4 477.8,429.5 477.2,433.8 476.8,434.6 476.2,429.6 475.8,433.9 475.2,435.4 474.8,425.3 474.2,429.1 473.8,409.3 473.2,430.4 472.8,428.4 472.2,432.5 471.8,424.8 471.2,431.3 470.8,426.6 470.2,426.0 469.8,424.8 469.2,429.6 468.8,426.5 468.2,433.5 467.8,429.0 467.2,434.5 466.8,426.0 466.2,425.3 465.8,427.7 465.2,426.7 464.8,433.4 464.2,425.4 463.8,427.8 463.2,426.3 462.8,427.5 462.2,431.7 461.8,425.4 461.2,427.9 460.8,428.9 460.2,434.8 459.8,429.8 459.2,426.5 458.8,433.9 458.2,426.7 457.8,433.7 457.2,427.7 456.8,435.1 456.2,426.1 455.8,428.4 455.2,432.6 454.8,427.3 454.2,433.8 453.8,428.7 453.2,434.5 452.8,433.4 452.2,426.2 451.8,430.3 451.2,425.1 450.8,429.7 450.2,431.1 449.8,426.2 449.2,425.4 448.8,425.1 448.2,426.6 447.8,427.7 447.2,424.9 446.8,425.5 446.2,429.1 445.8,408.9 445.2,425.4 444.8,432.8 444.2,429.9 443.8,427.7 443.2,430.1 442.8,429.7 442.2,425.0 441.8,424.9 441.2,429.4 440.8,430.4 440.2,425.0 439.8,425.7 439.2,433.9 438.8,428.9 438.2,432.7 437.8,414.1 437.2,428.5 436.8,426.2 436.2,434.7 435.8,435.3 435.2,427.9 434.8,426.3 434.2,426.2 433.8,432.8 433.2,435.1 432.8,431.7 432.2,426.9 431.8,431.0 431.2,435.6 430.8,429.9 430.2,427.7 429.8,429.4 429.2,429.6 428.8,430.3 428.2,425.2 427.8,427.2 427.2,426.6 426.8,410.7 426.2,433.2 425.8,432.0 425.2,433.7 424.8,427.1 424.2,427.3 423.8,427.8 423.2,427.6 422.8,426.6 422.2,427.3 421.8,434.8 421.2,425.9 420.8,429.6 420.2,429.4 419.8,424.8 419.2,433.2 418.8,427.0 418.2,431.1 417.8,428.8 417.2,431.0 416.8,425.6 416.2,434.5 415.8,432.3 415.2,430.1 414.8,428.2 414.2,432.7 413.8,427.3 413.2,428.6 412.8,431.0 412.2,425.0 411.8,430.3 411.2,434.1 410.8,428.4 410.2,435.4 409.8,429.5 409.2,425.9 408.8,425.1 408.2,430.3 407.8,425.3 407.2,430.9 406.8,427.6 406.2,433.3 405.8,431.4 405.2,425.0 404.8,427.8 404.2,428.0 403.8,435.3 403.2,431.2 402.8,431.4 402.2,427.3 401.8,428.8 401.2,434.0 400.8,427.0 400.2,431.7 399.8,426.0 399.2,429.6 398.8,435.7 398.2,434.1 397.8,430.5 397.2,417.9 396.8,426.1 396.2,432.9 395.8,434.8 395.2,425.6 394.8,432.0 394.2,430.0 393.8,432.0 393.2,424.9 392.8,433.7 392.2,429.3 391.8,433.1 391.2,435.7 390.8,433.4 390.2,418.3 389.8,428.6 389.2,432.2 388.8,427.1 388.2,431.9 387.8,428.4 387.2,411.3 386.8,428.1 386.2,429.5 385.8,434.2 385.2,435.6 384.8,433.3 384.2,429.4 383.8,430.7 383.2,427.3 382.8,427.5 382.2,430.0 381.8,426.3 381.2,425.6 380.8,425.2 380.2,434.4 379.8,426.0 379.2,432.2 378.8,428.0 378.2,426.2 377.8,427.7 377.2,430.2 376.8,435.8 376.2,427.4 375.8,427.7 375.2,425.0 374.8,431.7 374.2,427.2 373.8,435.6 373.2,430.1 372.8,435.2 372.2,430.7 371.8,425.5 371.2,430.6 370.8,434.7 370.2,427.3 369.8,426.7 369.2,431.3 368.8,419.2 368.2,430.7 367.8,431.0 367.2,435.8 366.8,429.0 366.2,425.8 365.8,430.7 365.2,429.9 364.8,424.8 364.2,430.9 363.8,425.5 363.2,424.9 362.8,425.7 362.2,425.4 361.8,430.7 361.2,435.2 360.8,428.0 360.2,434.8 359.8,425.4 359.2,433.8 358.8,428.2 358.2,428.6 357.8,425.0 357.2,435.6 356.8,427.5 356.2,432.3 355.8,430.4 355.2,428.9 354.8,425.1 354.2,411.0 353.8,427.7 353.2,429.5 352.8,431.3Z"/><rect x="514.2" y="309.3" width="136.3" height="147.4" rx="3.5" fill="#d1d6e6"/><path clip-path="url(#c4)" fill="#4662d2" d="M514.5,338.8 515.0,338.1 515.5,348.9 516.0,360.7 516.5,343.8 517.0,337.7 517.5,350.1 518.0,347.7 518.5,350.8 519.0,348.2 519.5,339.9 520.0,347.2 520.5,344.3 521.0,341.6 521.5,351.6 522.0,345.0 522.5,344.2 523.0,344.5 523.5,351.9 524.0,347.8 524.5,348.0 525.0,341.9 525.5,349.6 526.0,352.0 526.5,351.2 527.0,345.9 527.5,342.6 528.0,345.0 528.5,341.3 529.0,342.9 529.5,345.6 530.0,346.1 530.5,340.9 531.0,347.8 531.5,346.4 532.0,347.7 532.5,344.5 533.0,352.5 533.5,352.4 534.0,342.6 534.5,352.5 535.0,341.6 535.5,351.2 536.0,343.3 536.5,352.3 537.0,343.7 537.5,349.5 538.0,351.5 538.5,352.1 539.0,342.4 539.5,342.9 540.0,341.6 540.5,342.6 541.0,352.8 541.5,343.3 542.0,352.1 542.5,352.6 543.0,346.8 543.5,352.4 544.0,346.9 544.5,352.7 545.0,348.9 545.5,341.1 546.0,351.7 546.5,348.9 547.0,352.6 547.5,360.4 548.0,349.0 548.5,346.6 549.0,352.1 549.5,352.1 550.0,345.8 550.5,342.9 551.0,343.1 551.5,345.5 552.0,352.3 552.5,352.1 553.0,348.0 553.5,350.5 554.0,343.2 554.5,350.4 555.0,351.1 555.5,347.4 556.0,352.0 556.5,346.8 557.0,351.6 557.5,345.2 558.0,348.2 558.5,350.6 559.0,351.9 559.5,341.9 560.0,342.5 560.5,352.1 561.0,349.6 561.5,349.9 562.0,351.3 562.5,347.3 563.0,349.5 563.5,342.2 564.0,351.6 564.5,351.5 565.0,347.3 565.5,352.8 566.0,352.5 566.5,345.3 567.0,344.0 567.5,341.6 568.0,352.6 568.5,341.2 569.0,352.8 569.5,352.5 570.0,344.5 570.5,351.8 571.0,350.9 571.5,351.5 572.0,346.8 572.5,341.4 573.0,352.7 573.5,346.1 574.0,362.8 574.5,342.9 575.0,348.1 575.5,347.7 576.0,352.8 576.5,345.1 577.0,350.3 577.5,347.5 578.0,344.0 578.5,348.5 579.0,348.0 579.5,344.3 580.0,341.9 580.5,350.6 581.0,345.6 581.5,347.5 582.0,352.7 582.5,340.9 583.0,352.2 583.5,351.6 584.0,344.7 584.5,350.5 585.0,344.8 585.5,344.9 586.0,351.4 586.5,349.4 587.0,350.7 587.5,352.2 588.0,344.1 588.5,350.3 589.0,346.4 589.5,342.2 590.0,361.0 590.5,346.5 591.0,351.8 591.5,352.7 592.0,341.2 592.5,352.6 593.0,359.8 593.5,350.2 594.0,343.5 594.5,350.5 595.0,346.0 595.5,341.4 596.0,347.0 596.5,351.4 597.0,363.5 597.5,349.6 598.0,340.8 598.5,346.3 599.0,352.5 599.5,341.8 600.0,351.9 600.5,348.6 601.0,352.7 601.5,350.8 602.0,349.7 602.5,348.9 603.0,352.8 603.5,356.7 604.0,356.2 604.5,360.0 605.0,361.1 605.5,361.8 606.0,359.2 606.5,361.7 607.0,361.3 607.5,359.9 608.0,361.8 608.5,361.8 609.0,361.5 609.5,361.7 610.0,360.5 610.5,360.0 611.0,360.1 611.5,361.1 612.0,361.3 612.5,360.8 613.0,361.9 613.5,361.8 614.0,359.2 614.5,361.0 615.0,360.8 615.5,361.0 616.0,359.9 616.5,361.3 617.0,368.4 617.5,360.0 618.0,361.5 618.5,361.4 619.0,359.7 619.5,360.9 620.0,360.5 620.5,360.2 621.0,361.8 621.5,360.0 622.0,361.0 622.5,362.0 623.0,361.8 623.5,362.1 624.0,362.0 624.5,361.6 625.0,360.4 625.5,361.2 626.0,360.0 626.5,361.8 627.0,360.4 627.5,361.9 628.0,360.3 628.5,360.4 629.0,361.3 629.5,360.8 630.0,361.9 630.5,359.6 631.0,361.2 631.5,360.8 632.0,362.0 632.5,361.6 633.0,361.9 633.5,359.9 634.0,362.1 634.5,361.8 635.0,361.8 635.5,361.9 636.0,360.1 636.5,362.1 637.0,362.0 637.5,360.0 638.0,366.6 638.5,361.9 639.0,361.2 639.5,360.1 640.0,361.9 640.5,362.4 641.0,360.2 641.5,362.1 642.0,362.1 642.5,359.8 643.0,360.6 643.5,361.5 644.0,362.3 644.5,362.0 645.0,362.5 645.5,361.7 646.0,359.8 646.5,362.6 647.0,361.6 647.5,362.6 648.0,362.7 648.5,360.4 649.0,362.8 649.5,361.4 650.0,362.1 650.5,362.7 650.5,405.7 650.0,405.4 649.5,406.3 649.0,406.3 648.5,405.3 648.0,404.8 647.5,404.8 647.0,406.5 646.5,400.6 646.0,405.2 645.5,405.6 645.0,405.0 644.5,405.6 644.0,406.5 643.5,406.8 643.0,404.9 642.5,406.7 642.0,405.7 641.5,406.8 641.0,406.0 640.5,405.1 640.0,406.4 639.5,407.0 639.0,406.4 638.5,405.7 638.0,405.5 637.5,405.3 637.0,399.9 636.5,405.1 636.0,405.8 635.5,405.2 635.0,405.1 634.5,406.8 634.0,406.8 633.5,405.3 633.0,407.1 632.5,406.3 632.0,406.0 631.5,406.6 631.0,406.4 630.5,404.8 630.0,405.1 629.5,405.0 629.0,406.9 628.5,405.8 628.0,407.1 627.5,406.3 627.0,406.4 626.5,404.9 626.0,406.0 625.5,406.9 625.0,407.1 624.5,405.9 624.0,405.0 623.5,405.2 623.0,406.7 622.5,405.0 622.0,405.6 621.5,406.1 621.0,405.2 620.5,405.6 620.0,407.2 619.5,407.4 619.0,407.3 618.5,405.0 618.0,404.8 617.5,405.2 617.0,404.8 616.5,404.8 616.0,407.5 615.5,404.8 615.0,406.6 614.5,405.0 614.0,407.2 613.5,407.1 613.0,406.1 612.5,405.6 612.0,404.9 611.5,405.0 611.0,405.2 610.5,405.2 610.0,405.4 609.5,406.7 609.0,405.1 608.5,405.1 608.0,405.2 607.5,406.7 607.0,405.7 606.5,406.1 606.0,404.8 605.5,405.2 605.0,405.8 604.5,408.0 604.0,410.0 603.5,412.8 603.0,414.6 602.5,416.7 602.0,409.4 601.5,417.9 601.0,419.7 600.5,419.7 600.0,425.8 599.5,421.0 599.0,407.3 598.5,418.3 598.0,418.2 597.5,425.7 597.0,418.2 596.5,425.1 596.0,420.4 595.5,420.3 595.0,418.1 594.5,421.8 594.0,418.1 593.5,425.6 593.0,423.9 592.5,418.9 592.0,422.3 591.5,423.3 591.0,423.1 590.5,423.0 590.0,418.9 589.5,419.8 589.0,420.9 588.5,419.0 588.0,424.0 587.5,418.1 587.0,420.5 586.5,421.1 586.0,423.5 585.5,418.0 585.0,419.6 584.5,420.5 584.0,418.1 583.5,425.3 583.0,418.5 582.5,418.8 582.0,424.1 581.5,424.3 581.0,417.8 580.5,418.9 580.0,418.2 579.5,418.5 579.0,418.2 578.5,425.4 578.0,424.4 577.5,418.6 577.0,421.0 576.5,420.0 576.0,423.5 575.5,418.4 575.0,423.7 574.5,423.3 574.0,417.9 573.5,418.4 573.0,419.6 572.5,420.5 572.0,420.9 571.5,413.9 571.0,424.5 570.5,423.1 570.0,423.7 569.5,423.4 569.0,420.2 568.5,419.0 568.0,425.6 567.5,419.5 567.0,407.2 566.5,422.2 566.0,419.0 565.5,423.1 565.0,420.7 564.5,419.6 564.0,420.2 563.5,425.6 563.0,421.4 562.5,422.2 562.0,417.9 561.5,419.8 561.0,421.9 560.5,420.6 560.0,423.2 559.5,422.2 559.0,420.4 558.5,424.1 558.0,425.1 557.5,423.4 557.0,419.5 556.5,424.2 556.0,418.2 555.5,424.5 555.0,422.3 554.5,419.4 554.0,422.3 553.5,420.8 553.0,419.6 552.5,417.9 552.0,422.2 551.5,418.9 551.0,420.2 550.5,420.9 550.0,420.7 549.5,418.9 549.0,421.5 548.5,425.3 548.0,419.1 547.5,417.9 547.0,417.9 546.5,418.6 546.0,413.6 545.5,419.6 545.0,425.7 544.5,418.1 544.0,420.6 543.5,423.0 543.0,418.1 542.5,418.7 542.0,418.3 541.5,422.6 541.0,417.8 540.5,418.3 540.0,420.9 539.5,421.9 539.0,422.4 538.5,419.5 538.0,419.7 537.5,421.4 537.0,421.9 536.5,420.3 536.0,421.2 535.5,420.7 535.0,419.6 534.5,425.7 534.0,423.2 533.5,425.6 533.0,424.3 532.5,425.0 532.0,419.8 531.5,422.0 531.0,421.0 530.5,420.5 530.0,423.0 529.5,418.3 529.0,419.3 528.5,417.8 528.0,417.8 527.5,420.7 527.0,422.2 526.5,417.8 526.0,420.2 525.5,419.4 525.0,421.0 524.5,424.4 524.0,420.1 523.5,421.4 523.0,418.2 522.5,419.0 522.0,410.7 521.5,421.1 521.0,422.3 520.5,420.3 520.0,418.4 519.5,417.3 519.0,421.6 518.5,419.1 518.0,422.2 517.5,417.9 517.0,424.5 516.5,421.7 516.0,419.7 515.5,417.5 515.0,418.1 514.5,418.9Z"/><rect x="652.4" y="309.3" width="78.6" height="147.4" rx="3.5" fill="#d1d6e6"/><path clip-path="url(#c5)" fill="#4662d2" d="M652.6,343.3 653.1,344.4 653.6,349.5 654.1,343.3 654.6,353.8 655.1,348.9 655.6,351.0 656.1,345.8 656.6,346.1 657.1,348.0 657.6,357.4 658.1,358.0 658.6,352.0 659.1,360.1 659.6,359.4 660.1,361.4 660.6,357.5 661.1,362.7 661.6,361.0 662.1,359.9 662.6,360.3 663.1,363.3 663.6,357.3 664.1,355.9 664.6,360.9 665.1,363.3 665.6,363.4 666.1,354.1 666.6,363.2 667.1,362.2 667.6,363.4 668.1,358.6 668.6,357.5 669.1,363.5 669.6,356.8 670.1,355.7 670.6,357.0 671.1,356.1 671.6,363.7 672.1,363.8 672.6,362.8 673.1,360.4 673.6,354.9 674.1,361.0 674.6,363.8 675.1,360.4 675.6,356.9 676.1,363.3 676.6,362.1 677.1,356.8 677.6,363.8 678.1,363.4 678.6,354.9 679.1,356.8 679.6,362.7 680.1,363.8 680.6,363.2 681.1,362.2 681.6,356.2 682.1,359.3 682.6,357.3 683.1,362.6 683.6,359.9 684.1,359.7 684.6,356.4 685.1,356.4 685.6,362.8 686.1,355.2 686.6,363.8 687.1,362.4 687.6,361.4 688.1,361.4 688.6,353.8 689.1,359.0 689.6,363.8 690.1,361.9 690.6,363.3 691.1,359.4 691.6,359.7 692.1,363.8 692.6,355.7 693.1,354.8 693.6,361.9 694.1,356.7 694.6,360.4 695.1,359.3 695.6,363.7 696.1,357.0 696.6,363.5 697.1,361.0 697.6,357.9 698.1,363.8 698.6,363.3 699.1,358.4 699.6,363.8 700.1,363.2 700.6,356.2 701.1,363.8 701.6,361.9 702.1,361.2 702.6,363.7 703.1,362.8 703.6,361.2 704.1,359.8 704.6,360.6 705.1,368.8 705.6,363.8 706.1,358.9 706.6,363.7 707.1,355.8 707.6,357.4 708.1,356.9 708.6,363.7 709.1,368.9 709.6,360.7 710.1,363.3 710.6,362.0 711.1,363.8 711.6,363.5 712.1,359.6 712.6,355.4 713.1,363.3 713.6,354.2 714.1,354.5 714.6,361.3 715.1,363.8 715.6,359.4 716.1,359.2 716.6,362.2 717.1,363.3 717.6,363.5 718.1,363.7 718.6,363.8 719.1,366.5 719.6,363.7 720.1,363.6 720.6,354.7 721.1,361.6 721.6,362.1 722.1,361.1 722.6,361.2 723.1,355.0 723.6,363.1 724.1,363.6 724.6,360.6 725.1,363.2 725.6,363.7 726.1,361.7 726.6,361.2 727.1,361.3 727.6,358.2 728.1,362.8 728.6,361.4 729.1,363.4 729.6,363.1 730.1,363.6 730.6,361.2 730.6,408.6 730.1,405.2 729.6,402.8 729.1,408.2 728.6,405.9 728.1,408.6 727.6,407.4 727.1,402.8 726.6,404.2 726.1,404.0 725.6,404.2 725.1,398.6 724.6,403.6 724.1,403.6 723.6,406.9 723.1,404.7 722.6,407.5 722.1,403.3 721.6,402.9 721.1,404.5 720.6,403.1 720.1,403.2 719.6,403.1 719.1,403.4 718.6,404.8 718.1,408.6 717.6,403.0 717.1,402.9 716.6,404.6 716.1,403.7 715.6,404.0 715.1,404.8 714.6,403.1 714.1,404.7 713.6,402.9 713.1,403.0 712.6,406.4 712.1,404.4 711.6,404.7 711.1,404.3 710.6,406.4 710.1,404.9 709.6,397.3 709.1,402.9 708.6,403.1 708.1,402.9 707.6,403.3 707.1,406.1 706.6,402.8 706.1,406.7 705.6,408.8 705.1,399.4 704.6,403.1 704.1,402.8 703.6,404.4 703.1,407.8 702.6,402.8 702.1,402.8 701.6,403.6 701.1,403.6 700.6,402.8 700.1,402.8 699.6,403.4 699.1,404.4 698.6,403.3 698.1,404.8 697.6,403.3 697.1,403.5 696.6,405.7 696.1,402.9 695.6,402.8 695.1,405.9 694.6,402.8 694.1,405.3 693.6,403.0 693.1,402.8 692.6,403.0 692.1,404.0 691.6,406.1 691.1,408.0 690.6,405.8 690.1,398.8 689.6,405.5 689.1,402.8 688.6,408.8 688.1,403.1 687.6,408.4 687.1,403.0 686.6,403.0 686.1,405.2 685.6,406.8 685.1,402.9 684.6,402.9 684.1,402.8 683.6,402.8 683.1,402.8 682.6,408.1 682.1,404.4 681.6,404.4 681.1,404.1 680.6,403.9 680.1,402.8 679.6,403.3 679.1,408.4 678.6,404.0 678.1,399.2 677.6,403.4 677.1,407.9 676.6,399.9 676.1,403.5 675.6,406.9 675.1,406.0 674.6,402.8 674.1,403.8 673.6,405.3 673.1,408.2 672.6,405.1 672.1,404.3 671.6,403.8 671.1,407.3 670.6,403.5 670.1,404.0 669.6,404.4 669.1,405.9 668.6,402.8 668.1,403.3 667.6,402.8 667.1,406.3 666.6,403.3 666.1,403.8 665.6,405.1 665.1,406.5 664.6,404.8 664.1,405.1 663.6,405.3 663.1,405.0 662.6,404.9 662.1,404.6 661.6,403.2 661.1,403.8 660.6,404.2 660.1,411.0 659.6,410.4 659.1,405.8 658.6,406.3 658.1,412.4 657.6,411.5 657.1,409.6 656.6,412.5 656.1,408.7 655.6,410.3 655.1,412.1 654.6,412.9 654.1,411.0 653.6,411.4 653.1,411.7 652.6,414.3Z"/><rect x="732.8" y="309.3" width="101.8" height="147.4" rx="3.5" fill="#d1d6e6"/><path clip-path="url(#c6)" fill="#4662d2" d="M733.0,356.7 733.5,363.8 734.0,358.0 734.5,363.4 735.0,361.6 735.5,352.1 736.0,361.2 736.5,362.7 737.0,362.9 737.5,353.6 738.0,362.6 738.5,357.1 739.0,357.3 739.5,363.5 740.0,363.6 740.5,362.9 741.0,353.3 741.5,361.5 742.0,362.4 742.5,363.8 743.0,363.8 743.5,363.8 744.0,358.8 744.5,362.3 745.0,363.4 745.5,363.8 746.0,361.0 746.5,359.6 747.0,362.2 747.5,363.8 748.0,356.6 748.5,363.8 749.0,355.5 749.5,350.0 750.0,362.5 750.5,355.2 751.0,363.1 751.5,362.9 752.0,354.6 752.5,361.0 753.0,354.4 753.5,351.8 754.0,350.8 754.5,355.2 755.0,351.2 755.5,353.8 756.0,355.6 756.5,353.5 757.0,363.4 757.5,349.3 758.0,362.3 758.5,363.8 759.0,352.1 759.5,363.3 760.0,359.3 760.5,351.5 761.0,351.3 761.5,362.3 762.0,359.7 762.5,360.5 763.0,363.8 763.5,354.5 764.0,363.8 764.5,363.1 765.0,361.6 765.5,360.8 766.0,363.6 766.5,362.0 767.0,355.8 767.5,363.1 768.0,360.6 768.5,359.9 769.0,362.5 769.5,363.2 770.0,360.8 770.5,362.3 771.0,362.1 771.5,360.6 772.0,355.9 772.5,362.1 773.0,360.2 773.5,359.9 774.0,361.4 774.5,362.2 775.0,354.3 775.5,363.3 776.0,362.5 776.5,363.3 777.0,355.9 777.5,363.4 778.0,356.8 778.5,363.0 779.0,361.6 779.5,361.8 780.0,362.6 780.5,361.0 781.0,363.4 781.5,360.1 782.0,357.3 782.5,362.7 783.0,358.9 783.5,360.8 784.0,363.0 784.5,370.7 785.0,354.9 785.5,362.9 786.0,356.9 786.5,363.3 787.0,362.9 787.5,363.3 788.0,363.3 788.5,362.4 789.0,357.1 789.5,362.7 790.0,362.8 790.5,368.4 791.0,361.9 791.5,362.5 792.0,357.4 792.5,362.6 793.0,362.5 793.5,356.2 794.0,363.2 794.5,363.2 795.0,366.8 795.5,362.9 796.0,363.2 796.5,363.1 797.0,363.1 797.5,360.2 798.0,362.2 798.5,362.1 799.0,361.5 799.5,362.3 800.0,365.3 800.5,362.4 801.0,356.6 801.5,361.7 802.0,358.9 802.5,362.1 803.0,357.9 803.5,365.8 804.0,357.3 804.5,357.6 805.0,362.1 805.5,362.1 806.0,360.6 806.5,356.5 807.0,362.6 807.5,362.9 808.0,361.6 808.5,362.9 809.0,358.1 809.5,362.2 810.0,355.5 810.5,362.8 811.0,358.4 811.5,359.6 812.0,362.7 812.5,362.8 813.0,362.6 813.5,357.2 814.0,359.3 814.5,362.8 815.0,362.7 815.5,362.4 816.0,359.9 816.5,361.0 817.0,360.6 817.5,362.1 818.0,362.0 818.5,354.8 819.0,356.2 819.5,361.6 820.0,361.3 820.5,361.1 821.0,360.7 821.5,360.1 822.0,361.0 822.5,360.8 823.0,360.4 823.5,360.6 824.0,360.4 824.5,356.6 825.0,357.7 825.5,354.3 826.0,357.8 826.5,359.1 827.0,356.0 827.5,357.2 828.0,359.4 828.5,357.5 829.0,354.9 829.5,357.2 830.0,358.9 830.5,356.8 831.0,354.7 831.5,358.3 832.0,358.1 832.5,358.4 833.0,355.9 833.5,355.2 834.0,357.5 834.5,357.4 834.5,409.8 834.0,409.5 833.5,411.7 833.0,409.3 832.5,409.1 832.0,409.9 831.5,410.4 831.0,410.1 830.5,408.6 830.0,408.5 829.5,409.4 829.0,409.2 828.5,408.3 828.0,409.9 827.5,408.0 827.0,407.7 826.5,407.6 826.0,411.0 825.5,407.0 825.0,408.8 824.5,407.9 824.0,407.0 823.5,408.6 823.0,406.9 822.5,406.3 822.0,406.0 821.5,405.8 821.0,408.7 820.5,405.5 820.0,407.3 819.5,405.2 819.0,407.5 818.5,404.9 818.0,407.5 817.5,397.9 817.0,404.4 816.5,404.3 816.0,408.5 815.5,406.5 815.0,405.4 814.5,408.2 814.0,403.9 813.5,405.0 813.0,403.8 812.5,404.2 812.0,406.4 811.5,406.4 811.0,403.9 810.5,409.3 810.0,407.5 809.5,403.8 809.0,408.9 808.5,403.8 808.0,407.1 807.5,403.9 807.0,404.6 806.5,407.9 806.0,408.9 805.5,410.6 805.0,403.8 804.5,404.4 804.0,405.0 803.5,405.0 803.0,404.1 802.5,405.1 802.0,404.0 801.5,408.4 801.0,406.5 800.5,408.5 800.0,398.3 799.5,406.2 799.0,403.8 798.5,409.7 798.0,404.0 797.5,410.1 797.0,404.1 796.5,403.8 796.0,404.2 795.5,406.9 795.0,399.1 794.5,405.2 794.0,403.8 793.5,403.8 793.0,405.0 792.5,404.5 792.0,405.1 791.5,405.7 791.0,403.8 790.5,407.3 790.0,410.0 789.5,404.7 789.0,406.6 788.5,406.5 788.0,410.6 787.5,406.7 787.0,408.2 786.5,403.9 786.0,405.7 785.5,404.5 785.0,410.0 784.5,403.8 784.0,409.0 783.5,403.9 783.0,404.5 782.5,404.4 782.0,404.2 781.5,404.1 781.0,403.8 780.5,403.8 780.0,408.9 779.5,408.0 779.0,407.4 778.5,406.3 778.0,404.2 777.5,405.0 777.0,408.3 776.5,405.4 776.0,403.8 775.5,406.2 775.0,408.0 774.5,409.1 774.0,410.2 773.5,403.8 773.0,404.1 772.5,409.6 772.0,407.4 771.5,397.1 771.0,406.5 770.5,403.9 770.0,407.7 769.5,403.9 769.0,406.2 768.5,410.3 768.0,403.8 767.5,403.9 767.0,408.6 766.5,409.7 766.0,406.8 765.5,403.8 765.0,407.1 764.5,408.8 764.0,406.4 763.5,406.5 763.0,404.9 762.5,404.1 762.0,405.3 761.5,407.5 761.0,403.9 760.5,403.8 760.0,403.8 759.5,407.3 759.0,409.3 758.5,406.5 758.0,405.5 757.5,410.9 757.0,403.8 756.5,404.2 756.0,421.7 755.5,404.4 755.0,407.0 754.5,413.8 754.0,420.2 753.5,417.6 753.0,404.0 752.5,419.9 752.0,412.6 751.5,408.0 751.0,403.9 750.5,404.9 750.0,411.6 749.5,405.5 749.0,415.7 748.5,404.0 748.0,418.5 747.5,405.0 747.0,408.5 746.5,407.2 746.0,405.7 745.5,405.2 745.0,421.3 744.5,403.8 744.0,404.8 743.5,403.9 743.0,403.9 742.5,414.9 742.0,411.5 741.5,404.4 741.0,415.0 740.5,410.6 740.0,405.5 739.5,401.4 739.0,408.9 738.5,412.5 738.0,404.3 737.5,403.8 737.0,405.1 736.5,403.8 736.0,404.1 735.5,403.8 735.0,406.6 734.5,407.3 734.0,409.3 733.5,405.6 733.0,408.1Z"/><rect x="836.7" y="309.3" width="89.1" height="147.4" rx="3.5" fill="#d1d6e6"/><path clip-path="url(#c7)" fill="#4662d2" d="M837.0,353.9 837.5,359.2 838.0,354.4 838.5,345.4 839.0,354.7 839.5,354.1 840.0,353.7 840.5,341.5 841.0,354.9 841.5,349.4 842.0,354.7 842.5,344.2 843.0,344.5 843.5,355.5 844.0,349.4 844.5,347.2 845.0,342.1 845.5,353.1 846.0,351.7 846.5,349.2 847.0,355.3 847.5,355.9 848.0,356.2 848.5,349.5 849.0,356.2 849.5,347.9 850.0,356.0 850.5,356.6 851.0,356.5 851.5,342.3 852.0,352.1 852.5,363.5 853.0,356.2 853.5,343.8 854.0,346.1 854.5,356.3 855.0,345.1 855.5,350.1 856.0,355.6 856.5,356.4 857.0,352.1 857.5,348.2 858.0,346.5 858.5,357.6 859.0,346.0 859.5,342.7 860.0,357.7 860.5,355.9 861.0,353.8 861.5,349.0 862.0,356.8 862.5,358.1 863.0,356.4 863.5,356.5 864.0,352.1 864.5,358.3 865.0,347.5 865.5,354.6 866.0,352.3 866.5,361.3 867.0,351.4 867.5,354.1 868.0,358.0 868.5,349.3 869.0,353.9 869.5,353.0 870.0,358.0 870.5,359.1 871.0,349.5 871.5,352.2 872.0,359.3 872.5,354.2 873.0,345.3 873.5,355.5 874.0,357.3 874.5,347.7 875.0,347.3 875.5,358.6 876.0,352.9 876.5,360.0 877.0,359.3 877.5,358.6 878.0,356.4 878.5,357.5 879.0,346.8 879.5,346.4 880.0,358.8 880.5,360.3 881.0,350.3 881.5,355.5 882.0,359.4 882.5,352.2 883.0,348.8 883.5,360.9 884.0,354.2 884.5,367.4 885.0,355.6 885.5,356.1 886.0,360.9 886.5,352.1 887.0,364.3 887.5,356.3 888.0,360.5 888.5,356.7 889.0,352.4 889.5,349.1 890.0,358.1 890.5,350.1 891.0,354.2 891.5,362.1 892.0,352.6 892.5,355.3 893.0,361.8 893.5,362.5 894.0,349.0 894.5,352.8 895.0,359.0 895.5,351.1 896.0,362.9 896.5,367.4 897.0,355.8 897.5,353.7 898.0,360.8 898.5,361.6 899.0,363.4 899.5,360.8 900.0,362.7 900.5,351.8 901.0,364.0 901.5,355.2 902.0,364.2 902.5,364.0 903.0,363.3 903.5,363.9 904.0,360.2 904.5,359.9 905.0,364.7 905.5,364.6 906.0,364.4 906.5,354.1 907.0,352.9 907.5,351.6 908.0,364.6 908.5,364.0 909.0,354.6 909.5,365.7 910.0,365.7 910.5,357.3 911.0,359.5 911.5,366.1 912.0,365.8 912.5,353.8 913.0,357.6 913.5,363.3 914.0,356.3 914.5,363.4 915.0,366.2 915.5,365.3 916.0,363.6 916.5,368.2 917.0,363.9 917.5,367.3 918.0,369.2 918.5,369.0 919.0,368.5 919.5,369.8 920.0,369.3 920.5,369.8 921.0,369.2 921.5,372.8 922.0,368.1 922.5,369.2 923.0,367.9 923.5,369.7 924.0,369.3 924.5,368.7 925.0,369.3 925.5,369.4 925.5,397.0 925.0,397.0 924.5,398.6 924.0,397.6 923.5,397.5 923.0,397.5 922.5,391.5 922.0,397.7 921.5,398.1 921.0,398.5 920.5,398.3 920.0,397.9 919.5,397.1 919.0,397.0 918.5,398.5 918.0,398.1 917.5,398.3 917.0,402.8 916.5,400.4 916.0,400.2 915.5,401.8 915.0,402.2 914.5,408.2 914.0,397.6 913.5,410.9 913.0,410.6 912.5,407.9 912.0,402.2 911.5,402.0 911.0,412.8 910.5,404.3 910.0,404.7 909.5,407.8 909.0,401.3 908.5,401.2 908.0,403.2 907.5,401.1 907.0,406.0 906.5,402.4 906.0,401.2 905.5,406.2 905.0,401.3 904.5,396.2 904.0,401.3 903.5,401.5 903.0,413.9 902.5,401.7 902.0,409.4 901.5,399.2 901.0,408.0 900.5,402.4 900.0,408.6 899.5,403.0 899.0,412.5 898.5,403.2 898.0,404.5 897.5,402.9 897.0,402.8 896.5,401.9 896.0,403.1 895.5,404.0 895.0,401.7 894.5,402.3 894.0,412.0 893.5,412.5 893.0,402.7 892.5,409.9 892.0,405.8 891.5,395.0 891.0,401.8 890.5,404.8 890.0,403.6 889.5,405.9 889.0,413.9 888.5,403.7 888.0,415.9 887.5,405.8 887.0,402.7 886.5,409.2 886.0,404.1 885.5,407.4 885.0,402.6 884.5,408.5 884.0,402.6 883.5,408.3 883.0,408.1 882.5,405.7 882.0,408.2 881.5,408.6 881.0,403.2 880.5,409.4 880.0,416.0 879.5,403.8 879.0,403.3 878.5,411.7 878.0,410.5 877.5,418.0 877.0,412.6 876.5,411.9 876.0,419.1 875.5,416.9 875.0,403.9 874.5,404.1 874.0,405.7 873.5,405.2 873.0,404.6 872.5,404.5 872.0,407.3 871.5,407.6 871.0,410.7 870.5,401.7 870.0,409.7 869.5,407.4 869.0,404.8 868.5,412.2 868.0,411.4 867.5,409.9 867.0,404.8 866.5,407.2 866.0,413.8 865.5,397.3 865.0,409.4 864.5,418.4 864.0,405.9 863.5,411.0 863.0,405.4 862.5,417.9 862.0,419.4 861.5,407.6 861.0,412.7 860.5,409.7 860.0,408.2 859.5,398.5 859.0,405.9 858.5,408.5 858.0,406.1 857.5,410.3 857.0,406.6 856.5,416.7 856.0,408.3 855.5,408.1 855.0,416.3 854.5,407.9 854.0,406.9 853.5,410.2 853.0,406.8 852.5,418.0 852.0,414.6 851.5,408.8 851.0,422.1 850.5,414.1 850.0,412.1 849.5,415.6 849.0,421.3 848.5,408.5 848.0,407.4 847.5,407.6 847.0,407.7 846.5,416.6 846.0,422.3 845.5,409.2 845.0,408.5 844.5,408.6 844.0,418.3 843.5,408.4 843.0,419.9 842.5,409.9 842.0,421.7 841.5,408.3 841.0,408.3 840.5,419.4 840.0,414.9 839.5,415.7 839.0,408.7 838.5,408.7 838.0,405.3 837.5,410.2 837.0,409.2Z"/><rect x="929.0" y="309.3" width="89.4" height="147.4" rx="3.5" fill="#d1d6e6"/><path clip-path="url(#c8)" fill="#4662d2" d="M929.2,344.4 929.8,342.1 930.2,348.7 930.8,346.8 931.2,342.8 931.8,338.6 932.2,346.9 932.8,348.0 933.2,341.9 933.8,339.5 934.2,331.8 934.8,338.0 935.2,343.5 935.8,338.7 936.2,345.8 936.8,343.4 937.2,338.6 937.8,338.8 938.2,345.3 938.8,347.3 939.2,347.6 939.8,346.1 940.2,343.8 940.8,333.5 941.2,338.9 941.8,345.2 942.2,336.3 942.8,343.9 943.2,342.1 943.8,333.0 944.2,338.9 944.8,341.8 945.2,344.7 945.8,332.0 946.2,334.0 946.8,348.4 947.2,339.2 947.8,334.1 948.2,345.7 948.8,335.3 949.2,345.9 949.8,334.6 950.2,340.8 950.8,344.5 951.2,347.5 951.8,348.3 952.2,345.9 952.8,337.3 953.2,343.7 953.8,346.2 954.2,344.2 954.8,339.0 955.2,347.0 955.8,338.2 956.2,332.0 956.8,337.1 957.2,338.8 957.8,333.4 958.2,341.6 958.8,338.8 959.2,344.2 959.8,346.5 960.2,348.0 960.8,333.1 961.2,358.6 961.8,337.8 962.2,332.6 962.8,342.8 963.2,336.6 963.8,333.0 964.2,339.6 964.8,346.7 965.2,333.3 965.8,332.1 966.2,333.6 966.8,346.5 967.2,343.1 967.8,348.7 968.2,346.7 968.8,334.1 969.2,337.6 969.8,332.4 970.2,343.8 970.8,344.4 971.2,344.8 971.8,346.3 972.2,347.9 972.8,339.2 973.2,345.0 973.8,339.6 974.2,344.1 974.8,339.2 975.2,332.0 975.8,346.1 976.2,335.2 976.8,343.6 977.2,339.1 977.8,345.3 978.2,348.6 978.8,345.4 979.2,344.2 979.8,345.2 980.2,347.4 980.8,345.6 981.2,339.9 981.8,342.4 982.2,343.1 982.8,344.3 983.2,344.1 983.8,332.3 984.2,335.4 984.8,335.1 985.2,340.9 985.8,359.9 986.2,345.5 986.8,348.3 987.2,342.2 987.8,358.7 988.2,348.5 988.8,341.0 989.2,355.3 989.8,343.4 990.2,348.1 990.8,345.1 991.2,339.7 991.8,340.2 992.2,332.2 992.8,348.2 993.2,338.9 993.8,341.9 994.2,347.0 994.8,338.1 995.2,347.9 995.8,345.0 996.2,346.0 996.8,346.1 997.2,341.9 997.8,338.2 998.2,356.1 998.8,348.4 999.2,340.3 999.8,348.3 1000.2,342.0 1000.8,342.4 1001.2,344.7 1001.8,333.0 1002.2,348.7 1002.8,344.9 1003.2,336.1 1003.8,346.6 1004.2,343.6 1004.8,348.7 1005.2,335.9 1005.8,332.7 1006.2,332.1 1006.8,346.3 1007.2,342.2 1007.8,336.2 1008.2,340.0 1008.8,333.8 1009.2,343.6 1009.8,347.8 1010.2,339.9 1010.8,334.2 1011.2,341.2 1011.8,348.5 1012.2,337.8 1012.8,338.4 1013.2,348.6 1013.8,347.5 1014.2,342.4 1014.8,347.0 1015.2,345.5 1015.8,339.6 1016.2,337.1 1016.8,333.1 1017.2,346.1 1017.8,336.5 1018.2,339.9 1018.2,418.7 1017.8,417.4 1017.2,427.9 1016.8,418.5 1016.2,428.1 1015.8,433.4 1015.2,428.5 1014.8,428.3 1014.2,421.7 1013.8,431.6 1013.2,424.7 1012.8,417.7 1012.2,421.8 1011.8,424.6 1011.2,417.0 1010.8,426.7 1010.2,423.3 1009.8,430.0 1009.2,421.4 1008.8,426.1 1008.2,419.4 1007.8,421.0 1007.2,427.3 1006.8,419.7 1006.2,406.8 1005.8,423.8 1005.2,424.3 1004.8,425.4 1004.2,423.7 1003.8,418.1 1003.2,422.9 1002.8,426.8 1002.2,420.7 1001.8,422.4 1001.2,430.6 1000.8,431.3 1000.2,425.9 999.8,423.0 999.2,426.0 998.8,419.0 998.2,419.5 997.8,420.9 997.2,421.1 996.8,431.2 996.2,422.3 995.8,423.8 995.2,429.2 994.8,433.5 994.2,431.4 993.8,430.6 993.2,421.1 992.8,427.4 992.2,418.1 991.8,420.6 991.2,429.3 990.8,428.5 990.2,430.1 989.8,419.4 989.2,423.3 988.8,424.4 988.2,433.1 987.8,422.8 987.2,428.8 986.8,429.5 986.2,423.4 985.8,426.8 985.2,418.6 984.8,423.4 984.2,424.4 983.8,424.7 983.2,427.6 982.8,430.3 982.2,419.3 981.8,417.3 981.2,422.0 980.8,418.4 980.2,419.9 979.8,421.3 979.2,426.1 978.8,430.6 978.2,429.9 977.8,418.8 977.2,422.8 976.8,425.2 976.2,411.1 975.8,421.5 975.2,421.4 974.8,432.5 974.2,427.3 973.8,427.2 973.2,418.5 972.8,428.0 972.2,419.2 971.8,429.8 971.2,425.1 970.8,421.6 970.2,432.6 969.8,429.6 969.2,433.0 968.8,419.4 968.2,433.0 967.8,430.3 967.2,424.8 966.8,427.5 966.2,429.1 965.8,425.4 965.2,424.3 964.8,420.3 964.2,422.7 963.8,421.6 963.2,421.7 962.8,423.0 962.2,428.9 961.8,417.5 961.2,433.5 960.8,417.8 960.2,419.9 959.8,427.5 959.2,428.7 958.8,418.9 958.2,425.7 957.8,422.9 957.2,430.9 956.8,417.2 956.2,429.6 955.8,421.6 955.2,426.4 954.8,431.7 954.2,418.2 953.8,416.8 953.2,429.4 952.8,418.8 952.2,431.6 951.8,431.7 951.2,425.4 950.8,428.9 950.2,428.3 949.8,425.8 949.2,417.2 948.8,430.9 948.2,418.2 947.8,424.9 947.2,422.5 946.8,431.4 946.2,430.0 945.8,433.4 945.2,417.6 944.8,423.0 944.2,426.5 943.8,420.8 943.2,419.4 942.8,418.8 942.2,420.3 941.8,431.3 941.2,433.7 940.8,431.7 940.2,417.4 939.8,429.9 939.2,418.3 938.8,417.8 938.2,424.2 937.8,421.5 937.2,422.1 936.8,433.0 936.2,421.2 935.8,424.9 935.2,432.3 934.8,417.7 934.2,425.7 933.8,417.9 933.2,416.9 932.8,416.9 932.2,417.9 931.8,418.7 931.2,427.5 930.8,424.3 930.2,417.9 929.8,416.8 929.2,404.6Z"/><rect x="1021.0" y="309.3" width="89.7" height="147.4" rx="3.5" fill="#d1d6e6"/><path clip-path="url(#c9)" fill="#4662d2" d="M1021.2,332.1 1021.8,347.1 1022.2,337.2 1022.8,342.4 1023.2,348.3 1023.8,344.2 1024.2,339.9 1024.8,334.7 1025.2,347.8 1025.8,347.8 1026.2,347.3 1026.8,333.0 1027.2,341.0 1027.8,336.6 1028.2,353.2 1028.8,342.7 1029.2,337.7 1029.8,344.4 1030.2,345.9 1030.8,332.0 1031.2,339.5 1031.8,344.1 1032.2,359.0 1032.8,331.7 1033.2,334.9 1033.8,345.1 1034.2,339.0 1034.8,337.3 1035.2,340.2 1035.8,343.5 1036.2,332.8 1036.8,344.9 1037.2,348.6 1037.8,337.0 1038.2,343.6 1038.8,339.0 1039.2,339.2 1039.8,338.8 1040.2,345.4 1040.8,338.8 1041.2,335.1 1041.8,344.2 1042.2,344.6 1042.8,342.3 1043.2,344.4 1043.8,341.0 1044.2,346.2 1044.8,346.4 1045.2,347.1 1045.8,333.6 1046.2,339.7 1046.8,332.9 1047.2,341.8 1047.8,331.2 1048.2,338.0 1048.8,335.4 1049.2,344.8 1049.8,353.2 1050.2,347.1 1050.8,342.3 1051.2,333.8 1051.8,341.8 1052.2,345.8 1052.8,347.4 1053.2,337.5 1053.8,348.7 1054.2,342.9 1054.8,341.1 1055.2,337.6 1055.8,332.6 1056.2,332.0 1056.8,348.6 1057.2,333.3 1057.8,342.3 1058.2,343.7 1058.8,336.8 1059.2,337.9 1059.8,342.8 1060.2,347.8 1060.8,333.2 1061.2,331.9 1061.8,336.1 1062.2,348.7 1062.8,355.7 1063.2,344.1 1063.8,332.2 1064.2,343.9 1064.8,348.3 1065.2,343.6 1065.8,336.0 1066.2,348.3 1066.8,333.8 1067.2,340.8 1067.8,333.1 1068.2,338.1 1068.8,346.8 1069.2,331.7 1069.8,335.3 1070.2,348.3 1070.8,333.3 1071.2,345.6 1071.8,344.4 1072.2,348.5 1072.8,339.4 1073.2,344.2 1073.8,348.1 1074.2,343.2 1074.8,345.7 1075.2,348.6 1075.8,346.5 1076.2,330.8 1076.8,331.8 1077.2,331.9 1077.8,333.8 1078.2,345.6 1078.8,346.8 1079.2,345.6 1079.8,340.9 1080.2,339.6 1080.8,339.7 1081.2,338.1 1081.8,331.6 1082.2,332.6 1082.8,333.0 1083.2,340.4 1083.8,347.6 1084.2,338.1 1084.8,337.6 1085.2,339.5 1085.8,347.3 1086.2,348.8 1086.8,344.7 1087.2,340.0 1087.8,339.4 1088.2,347.0 1088.8,341.3 1089.2,353.4 1089.8,347.2 1090.2,348.4 1090.8,339.9 1091.2,347.0 1091.8,347.4 1092.2,343.4 1092.8,340.5 1093.2,361.3 1093.8,334.1 1094.2,346.9 1094.8,343.9 1095.2,342.8 1095.8,348.6 1096.2,339.5 1096.8,342.0 1097.2,332.0 1097.8,347.7 1098.2,335.9 1098.8,343.2 1099.2,361.2 1099.8,359.8 1100.2,346.4 1100.8,346.8 1101.2,354.7 1101.8,336.9 1102.2,347.0 1102.8,333.5 1103.2,331.9 1103.8,348.7 1104.2,331.1 1104.8,336.7 1105.2,339.3 1105.8,340.7 1106.2,332.3 1106.8,346.5 1107.2,346.1 1107.8,338.4 1108.2,337.8 1108.8,347.2 1109.2,343.9 1109.8,341.9 1110.2,344.1 1110.2,423.4 1109.8,434.2 1109.2,419.8 1108.8,418.5 1108.2,423.2 1107.8,416.9 1107.2,434.3 1106.8,421.4 1106.2,419.7 1105.8,428.5 1105.2,419.5 1104.8,429.6 1104.2,420.8 1103.8,419.8 1103.2,417.8 1102.8,412.4 1102.2,411.2 1101.8,428.4 1101.2,426.0 1100.8,419.5 1100.2,417.3 1099.8,429.2 1099.2,430.4 1098.8,420.5 1098.2,429.0 1097.8,432.9 1097.2,418.0 1096.8,418.6 1096.2,430.2 1095.8,404.0 1095.2,425.8 1094.8,429.3 1094.2,428.6 1093.8,422.4 1093.2,418.3 1092.8,417.0 1092.2,423.7 1091.8,417.6 1091.2,420.3 1090.8,429.2 1090.2,425.8 1089.8,416.8 1089.2,423.7 1088.8,423.7 1088.2,427.0 1087.8,422.5 1087.2,433.4 1086.8,416.9 1086.2,412.3 1085.8,418.3 1085.2,417.2 1084.8,428.7 1084.2,434.4 1083.8,418.6 1083.2,419.0 1082.8,426.5 1082.2,431.8 1081.8,418.5 1081.2,433.9 1080.8,430.7 1080.2,427.2 1079.8,417.5 1079.2,426.6 1078.8,417.5 1078.2,425.9 1077.8,428.5 1077.2,423.4 1076.8,426.5 1076.2,420.3 1075.8,426.6 1075.2,421.8 1074.8,419.9 1074.2,423.8 1073.8,417.0 1073.2,431.0 1072.8,427.8 1072.2,412.7 1071.8,408.9 1071.2,428.0 1070.8,422.4 1070.2,425.1 1069.8,425.6 1069.2,429.2 1068.8,430.4 1068.2,418.9 1067.8,419.3 1067.2,427.6 1066.8,421.8 1066.2,426.4 1065.8,433.6 1065.2,412.9 1064.8,418.4 1064.2,424.2 1063.8,423.0 1063.2,422.5 1062.8,422.9 1062.2,425.3 1061.8,425.0 1061.2,425.0 1060.8,424.7 1060.2,418.6 1059.8,418.6 1059.2,423.2 1058.8,418.5 1058.2,429.8 1057.8,426.2 1057.2,407.6 1056.8,433.4 1056.2,429.5 1055.8,428.7 1055.2,420.9 1054.8,432.3 1054.2,433.0 1053.8,430.1 1053.2,429.3 1052.8,418.5 1052.2,421.1 1051.8,431.0 1051.2,419.2 1050.8,433.9 1050.2,421.5 1049.8,429.8 1049.2,421.4 1048.8,421.1 1048.2,430.8 1047.8,417.5 1047.2,422.6 1046.8,426.0 1046.2,433.7 1045.8,431.4 1045.2,430.3 1044.8,426.1 1044.2,418.6 1043.8,418.6 1043.2,424.7 1042.8,422.7 1042.2,426.7 1041.8,416.9 1041.2,408.9 1040.8,431.6 1040.2,404.0 1039.8,422.4 1039.2,419.9 1038.8,423.8 1038.2,426.9 1037.8,418.3 1037.2,421.4 1036.8,432.1 1036.2,426.4 1035.8,421.1 1035.2,420.4 1034.8,431.9 1034.2,433.4 1033.8,417.2 1033.2,413.2 1032.8,404.4 1032.2,429.8 1031.8,419.8 1031.2,423.6 1030.8,425.1 1030.2,419.0 1029.8,434.2 1029.2,426.3 1028.8,433.7 1028.2,418.6 1027.8,430.7 1027.2,424.4 1026.8,421.8 1026.2,417.3 1025.8,417.2 1025.2,425.5 1024.8,421.3 1024.2,426.8 1023.8,424.5 1023.2,433.0 1022.8,417.0 1022.2,433.8 1021.8,430.7 1021.2,420.0Z"/><rect x="1113.4" y="309.3" width="89.9" height="147.4" rx="3.5" fill="#d1d6e6"/><path clip-path="url(#c10)" fill="#4662d2" d="M1113.7,347.5 1114.2,334.0 1114.7,342.3 1115.2,343.0 1115.7,335.8 1116.2,344.9 1116.7,343.4 1117.2,346.0 1117.7,335.9 1118.2,348.3 1118.7,343.4 1119.2,337.1 1119.7,345.2 1120.2,344.2 1120.7,342.6 1121.2,348.0 1121.7,346.2 1122.2,347.3 1122.7,347.5 1123.2,342.4 1123.7,342.3 1124.2,341.2 1124.7,348.2 1125.2,342.3 1125.7,335.5 1126.2,340.6 1126.7,347.2 1127.2,352.0 1127.7,344.2 1128.2,351.2 1128.7,354.9 1129.2,355.6 1129.7,357.2 1130.2,358.6 1130.7,353.3 1131.2,358.4 1131.7,357.7 1132.2,358.5 1132.7,364.1 1133.2,365.5 1133.7,365.0 1134.2,367.8 1134.7,364.1 1135.2,368.7 1135.7,362.6 1136.2,351.2 1136.7,343.0 1137.2,345.9 1137.7,348.8 1138.2,343.8 1138.7,348.1 1139.2,348.0 1139.7,342.6 1140.2,347.2 1140.7,348.6 1141.2,345.9 1141.7,347.4 1142.2,347.5 1142.7,349.3 1143.2,342.3 1143.7,349.8 1144.2,349.1 1144.7,340.9 1145.2,340.2 1145.7,346.4 1146.2,340.6 1146.7,347.4 1147.2,344.3 1147.7,343.9 1148.2,344.1 1148.7,347.1 1149.2,346.3 1149.7,349.8 1150.2,341.7 1150.7,347.0 1151.2,344.6 1151.7,351.1 1152.2,353.7 1152.7,349.4 1153.2,351.1 1153.7,358.6 1154.2,360.6 1154.7,362.8 1155.2,364.3 1155.7,365.2 1156.2,366.7 1156.7,369.3 1157.2,361.8 1157.7,357.7 1158.2,348.9 1158.7,348.0 1159.2,348.9 1159.7,348.5 1160.2,348.8 1160.7,349.7 1161.2,347.5 1161.7,349.3 1162.2,344.9 1162.7,348.8 1163.2,349.6 1163.7,345.8 1164.2,349.6 1164.7,347.1 1165.2,344.1 1165.7,347.4 1166.2,344.7 1166.7,346.6 1167.2,346.6 1167.7,347.2 1168.2,348.8 1168.7,348.7 1169.2,347.9 1169.7,343.8 1170.2,346.2 1170.7,347.0 1171.2,345.5 1171.7,344.9 1172.2,345.0 1172.7,347.6 1173.2,345.9 1173.7,357.7 1174.2,350.0 1174.7,347.2 1175.2,352.3 1175.7,350.3 1176.2,352.1 1176.7,352.4 1177.2,354.6 1177.7,359.3 1178.2,359.6 1178.7,358.2 1179.2,361.9 1179.7,360.9 1180.2,354.4 1180.7,352.9 1181.2,352.3 1181.7,354.3 1182.2,354.2 1182.7,352.8 1183.2,354.4 1183.7,354.5 1184.2,352.4 1184.7,354.6 1185.2,354.8 1185.7,354.8 1186.2,354.3 1186.7,353.4 1187.2,354.8 1187.7,354.4 1188.2,351.3 1188.7,351.7 1189.2,354.1 1189.7,353.3 1190.2,354.1 1190.7,352.3 1191.2,352.4 1191.7,353.2 1192.2,354.8 1192.7,354.7 1193.2,352.3 1193.7,352.6 1194.2,354.4 1194.7,351.6 1195.2,351.0 1195.7,352.1 1196.2,352.1 1196.7,353.7 1197.2,354.1 1197.7,353.0 1198.2,356.7 1198.7,354.9 1199.2,357.9 1199.7,359.3 1200.2,359.5 1200.7,359.9 1201.2,361.2 1201.7,363.9 1202.2,364.0 1202.7,367.0 1203.2,366.5 1203.2,399.8 1202.7,400.5 1202.2,401.9 1201.7,403.1 1201.2,404.0 1200.7,404.6 1200.2,406.9 1199.7,406.9 1199.2,408.8 1198.7,410.0 1198.2,411.0 1197.7,410.5 1197.2,411.1 1196.7,410.8 1196.2,412.8 1195.7,413.7 1195.2,411.1 1194.7,411.4 1194.2,401.0 1193.7,412.5 1193.2,413.5 1192.7,411.9 1192.2,412.3 1191.7,413.1 1191.2,413.5 1190.7,410.8 1190.2,411.3 1189.7,413.7 1189.2,411.5 1188.7,411.0 1188.2,411.1 1187.7,412.8 1187.2,411.6 1186.7,411.5 1186.2,412.9 1185.7,412.7 1185.2,412.2 1184.7,412.0 1184.2,411.1 1183.7,410.8 1183.2,410.9 1182.7,411.2 1182.2,411.4 1181.7,411.0 1181.2,413.7 1180.7,411.5 1180.2,410.1 1179.7,402.3 1179.2,401.9 1178.7,402.5 1178.2,401.4 1177.7,405.9 1177.2,407.6 1176.7,408.9 1176.2,411.3 1175.7,410.2 1175.2,414.4 1174.7,414.9 1174.2,415.2 1173.7,417.5 1173.2,418.0 1172.7,417.7 1172.2,415.9 1171.7,416.0 1171.2,410.8 1170.7,417.8 1170.2,419.7 1169.7,418.3 1169.2,415.9 1168.7,418.3 1168.2,420.7 1167.7,419.4 1167.2,417.3 1166.7,417.1 1166.2,415.9 1165.7,417.2 1165.2,419.3 1164.7,417.9 1164.2,415.8 1163.7,420.7 1163.2,417.9 1162.7,420.7 1162.2,419.1 1161.7,419.5 1161.2,415.9 1160.7,416.7 1160.2,420.7 1159.7,415.9 1159.2,406.0 1158.7,417.8 1158.2,415.7 1157.7,408.9 1157.2,401.1 1156.7,396.2 1156.2,399.0 1155.7,400.7 1155.2,401.0 1154.7,402.0 1154.2,403.9 1153.7,405.8 1153.2,410.5 1152.7,411.9 1152.2,408.1 1151.7,416.0 1151.2,415.2 1150.7,420.1 1150.2,416.1 1149.7,415.7 1149.2,420.1 1148.7,420.5 1148.2,415.6 1147.7,417.1 1147.2,415.8 1146.7,417.4 1146.2,415.8 1145.7,418.0 1145.2,420.6 1144.7,417.2 1144.2,420.1 1143.7,420.2 1143.2,415.8 1142.7,415.2 1142.2,419.1 1141.7,419.1 1141.2,418.4 1140.7,416.1 1140.2,418.2 1139.7,418.7 1139.2,420.2 1138.7,405.3 1138.2,420.0 1137.7,415.7 1137.2,416.4 1136.7,419.4 1136.2,412.5 1135.7,405.1 1135.2,399.5 1134.7,402.5 1134.2,405.0 1133.7,407.1 1133.2,406.9 1132.7,405.9 1132.2,410.0 1131.7,410.7 1131.2,412.0 1130.7,415.4 1130.2,411.6 1129.7,411.5 1129.2,408.7 1128.7,417.6 1128.2,418.1 1127.7,421.2 1127.2,417.4 1126.7,418.8 1126.2,425.0 1125.7,406.9 1125.2,425.3 1124.7,421.5 1124.2,426.1 1123.7,421.3 1123.2,422.5 1122.7,423.5 1122.2,423.4 1121.7,422.7 1121.2,422.6 1120.7,421.5 1120.2,423.9 1119.7,423.7 1119.2,421.0 1118.7,420.9 1118.2,424.8 1117.7,427.8 1117.2,421.4 1116.7,421.0 1116.2,426.2 1115.7,428.5 1115.2,423.1 1114.7,428.6 1114.2,421.2 1113.7,427.1Z"/><rect x="1205.8" y="309.3" width="89.1" height="147.4" rx="3.5" fill="#d1d6e6"/><path clip-path="url(#c11)" fill="#4662d2" d="M1206.0,340.8 1206.5,355.1 1207.0,343.6 1207.5,350.0 1208.0,339.3 1208.5,339.0 1209.0,341.0 1209.5,352.7 1210.0,350.3 1210.5,344.7 1211.0,349.9 1211.5,348.1 1212.0,357.2 1212.5,357.5 1213.0,344.7 1213.5,338.0 1214.0,356.3 1214.5,355.5 1215.0,357.3 1215.5,346.7 1216.0,356.8 1216.5,338.1 1217.0,356.7 1217.5,344.0 1218.0,348.3 1218.5,340.6 1219.0,352.4 1219.5,356.7 1220.0,345.0 1220.5,343.4 1221.0,350.6 1221.5,366.7 1222.0,337.7 1222.5,356.6 1223.0,351.9 1223.5,336.4 1224.0,350.5 1224.5,353.0 1225.0,353.0 1225.5,353.7 1226.0,355.5 1226.5,353.5 1227.0,340.4 1227.5,356.5 1228.0,352.4 1228.5,350.1 1229.0,348.7 1229.5,345.7 1230.0,356.4 1230.5,356.1 1231.0,356.5 1231.5,341.8 1232.0,342.4 1232.5,338.6 1233.0,340.8 1233.5,350.6 1234.0,344.9 1234.5,353.5 1235.0,345.2 1235.5,338.4 1236.0,335.1 1236.5,353.8 1237.0,335.0 1237.5,355.5 1238.0,340.8 1238.5,351.3 1239.0,351.5 1239.5,355.6 1240.0,355.0 1240.5,350.6 1241.0,356.0 1241.5,343.7 1242.0,350.2 1242.5,351.2 1243.0,353.6 1243.5,364.2 1244.0,355.8 1244.5,352.5 1245.0,354.5 1245.5,378.7 1246.0,380.4 1246.5,380.5 1247.0,380.1 1247.5,380.1 1248.0,377.7 1248.5,343.2 1249.0,339.8 1249.5,331.3 1250.0,337.0 1250.5,343.7 1251.0,343.7 1251.5,344.1 1252.0,336.3 1252.5,336.3 1253.0,347.2 1253.5,346.0 1254.0,342.3 1254.5,340.4 1255.0,347.4 1255.5,346.7 1256.0,338.9 1256.5,342.3 1257.0,332.7 1257.5,341.7 1258.0,339.1 1258.5,346.1 1259.0,347.4 1259.5,337.3 1260.0,339.8 1260.5,338.6 1261.0,347.0 1261.5,343.5 1262.0,338.2 1262.5,356.5 1263.0,347.7 1263.5,341.9 1264.0,341.5 1264.5,341.9 1265.0,339.7 1265.5,331.6 1266.0,335.7 1266.5,343.1 1267.0,346.6 1267.5,360.8 1268.0,339.0 1268.5,338.7 1269.0,345.2 1269.5,337.2 1270.0,338.9 1270.5,337.4 1271.0,339.3 1271.5,344.6 1272.0,347.2 1272.5,333.4 1273.0,347.3 1273.5,346.8 1274.0,347.6 1274.5,360.2 1275.0,338.7 1275.5,345.6 1276.0,344.5 1276.5,344.3 1277.0,337.6 1277.5,345.4 1278.0,335.9 1278.5,347.1 1279.0,347.4 1279.5,341.7 1280.0,334.8 1280.5,341.5 1281.0,342.6 1281.5,336.4 1282.0,346.2 1282.5,332.2 1283.0,345.5 1283.5,344.6 1284.0,333.3 1284.5,335.7 1285.0,337.8 1285.5,342.6 1286.0,346.2 1286.5,345.2 1287.0,338.4 1287.5,331.9 1288.0,344.5 1288.5,340.2 1289.0,336.6 1289.5,342.7 1290.0,342.5 1290.5,335.3 1291.0,347.8 1291.5,343.6 1292.0,344.0 1292.5,340.5 1293.0,334.4 1293.5,338.4 1294.0,333.6 1294.5,343.0 1294.5,424.3 1294.0,431.5 1293.5,425.0 1293.0,424.4 1292.5,425.3 1292.0,426.8 1291.5,431.9 1291.0,431.4 1290.5,434.1 1290.0,432.4 1289.5,431.6 1289.0,425.2 1288.5,424.7 1288.0,426.3 1287.5,423.8 1287.0,424.5 1286.5,425.5 1286.0,428.9 1285.5,424.6 1285.0,427.0 1284.5,426.7 1284.0,427.5 1283.5,426.0 1283.0,433.1 1282.5,424.3 1282.0,426.4 1281.5,429.1 1281.0,431.5 1280.5,427.7 1280.0,426.3 1279.5,428.0 1279.0,432.5 1278.5,435.5 1278.0,425.3 1277.5,431.5 1277.0,423.8 1276.5,425.4 1276.0,428.6 1275.5,424.5 1275.0,427.1 1274.5,435.8 1274.0,434.5 1273.5,433.2 1273.0,429.6 1272.5,432.1 1272.0,426.1 1271.5,425.6 1271.0,432.2 1270.5,424.4 1270.0,431.2 1269.5,434.0 1269.0,426.3 1268.5,434.3 1268.0,427.2 1267.5,430.5 1267.0,424.3 1266.5,426.3 1266.0,433.2 1265.5,428.5 1265.0,431.0 1264.5,435.5 1264.0,430.1 1263.5,432.3 1263.0,423.8 1262.5,427.5 1262.0,432.7 1261.5,429.1 1261.0,435.2 1260.5,427.9 1260.0,425.4 1259.5,423.9 1259.0,427.1 1258.5,430.3 1258.0,434.0 1257.5,411.1 1257.0,424.7 1256.5,425.8 1256.0,435.4 1255.5,424.9 1255.0,435.4 1254.5,423.9 1254.0,424.8 1253.5,424.9 1253.0,429.1 1252.5,428.0 1252.0,424.0 1251.5,434.1 1251.0,431.3 1250.5,425.7 1250.0,432.8 1249.5,435.0 1249.0,424.8 1248.5,421.5 1248.0,389.7 1247.5,384.9 1247.0,385.7 1246.5,385.0 1246.0,385.3 1245.5,389.5 1245.0,422.3 1244.5,406.9 1244.0,407.9 1243.5,407.2 1243.0,408.9 1242.5,408.9 1242.0,407.2 1241.5,418.3 1241.0,417.7 1240.5,409.6 1240.0,406.8 1239.5,406.8 1239.0,411.8 1238.5,407.6 1238.0,422.7 1237.5,406.8 1237.0,430.0 1236.5,421.3 1236.0,424.4 1235.5,408.9 1235.0,407.3 1234.5,421.3 1234.0,407.7 1233.5,416.4 1233.0,409.5 1232.5,411.3 1232.0,417.1 1231.5,399.6 1231.0,423.4 1230.5,406.8 1230.0,407.9 1229.5,430.0 1229.0,425.6 1228.5,407.1 1228.0,407.7 1227.5,406.8 1227.0,407.6 1226.5,430.1 1226.0,407.8 1225.5,407.0 1225.0,406.8 1224.5,413.9 1224.0,431.1 1223.5,423.5 1223.0,426.9 1222.5,415.1 1222.0,413.2 1221.5,419.7 1221.0,427.7 1220.5,417.5 1220.0,409.6 1219.5,431.0 1219.0,407.3 1218.5,414.4 1218.0,411.4 1217.5,416.2 1217.0,406.9 1216.5,408.8 1216.0,408.0 1215.5,412.7 1215.0,422.4 1214.5,407.0 1214.0,412.0 1213.5,408.0 1213.0,415.2 1212.5,407.1 1212.0,413.8 1211.5,410.3 1211.0,420.6 1210.5,431.5 1210.0,406.8 1209.5,414.0 1209.0,407.8 1208.5,420.8 1208.0,413.9 1207.5,406.8 1207.0,414.9 1206.5,407.4 1206.0,408.9Z"/><rect x="1297.5" y="309.3" width="90.4" height="147.4" rx="3.5" fill="#d1d6e6"/><path clip-path="url(#c12)" fill="#4662d2" d="M1297.8,339.7 1298.2,336.4 1298.8,345.7 1299.2,330.7 1299.8,344.7 1300.2,339.8 1300.8,341.5 1301.2,342.5 1301.8,331.6 1302.2,341.4 1302.8,335.6 1303.2,338.8 1303.8,342.3 1304.2,333.6 1304.8,350.8 1305.2,342.8 1305.8,344.3 1306.2,330.4 1306.8,341.3 1307.2,340.2 1307.8,342.5 1308.2,358.8 1308.8,343.2 1309.2,343.0 1309.8,341.1 1310.2,342.0 1310.8,357.5 1311.2,334.5 1311.8,341.7 1312.2,334.6 1312.8,337.8 1313.2,342.4 1313.8,336.7 1314.2,341.6 1314.8,339.0 1315.2,345.7 1315.8,337.2 1316.2,341.9 1316.8,331.2 1317.2,353.3 1317.8,331.3 1318.2,338.6 1318.8,335.9 1319.2,338.8 1319.8,332.4 1320.2,345.4 1320.8,334.9 1321.2,345.8 1321.8,340.8 1322.2,340.1 1322.8,343.7 1323.2,343.1 1323.8,330.6 1324.2,344.6 1324.8,345.1 1325.2,331.1 1325.8,342.3 1326.2,339.0 1326.8,335.9 1327.2,331.6 1327.8,333.6 1328.2,340.4 1328.8,331.7 1329.2,339.5 1329.8,356.3 1330.2,330.5 1330.8,340.0 1331.2,338.5 1331.8,344.4 1332.2,340.6 1332.8,336.3 1333.2,340.4 1333.8,342.9 1334.2,332.1 1334.8,336.9 1335.2,336.9 1335.8,344.5 1336.2,343.4 1336.8,345.3 1337.2,332.7 1337.8,339.4 1338.2,340.4 1338.8,332.6 1339.2,345.0 1339.8,333.2 1340.2,341.1 1340.8,339.2 1341.2,335.5 1341.8,334.2 1342.2,341.8 1342.8,340.1 1343.2,336.5 1343.8,345.7 1344.2,341.4 1344.8,341.6 1345.2,334.3 1345.8,345.3 1346.2,340.4 1346.8,345.0 1347.2,342.2 1347.8,332.9 1348.2,333.3 1348.8,335.3 1349.2,340.2 1349.8,338.6 1350.2,331.0 1350.8,341.1 1351.2,338.5 1351.8,335.5 1352.2,334.2 1352.8,345.0 1353.2,340.9 1353.8,341.5 1354.2,344.4 1354.8,342.5 1355.2,337.7 1355.8,343.1 1356.2,344.3 1356.8,336.0 1357.2,344.8 1357.8,338.7 1358.2,337.1 1358.8,342.1 1359.2,343.2 1359.8,341.7 1360.2,336.1 1360.8,335.0 1361.2,338.1 1361.8,335.8 1362.2,336.7 1362.8,337.3 1363.2,344.7 1363.8,340.2 1364.2,341.8 1364.8,337.1 1365.2,344.5 1365.8,338.2 1366.2,344.2 1366.8,339.1 1367.2,342.2 1367.8,339.3 1368.2,333.3 1368.8,334.3 1369.2,343.4 1369.8,358.9 1370.2,342.7 1370.8,337.9 1371.2,343.8 1371.8,338.2 1372.2,336.1 1372.8,345.0 1373.2,334.0 1373.8,341.4 1374.2,337.5 1374.8,342.5 1375.2,340.7 1375.8,342.4 1376.2,345.7 1376.8,345.6 1377.2,334.5 1377.8,330.6 1378.2,345.2 1378.8,340.9 1379.2,345.8 1379.8,344.7 1380.2,336.2 1380.8,338.0 1381.2,332.4 1381.8,336.8 1382.2,345.2 1382.8,339.7 1383.2,339.3 1383.8,334.7 1384.2,340.3 1384.8,345.5 1385.2,344.8 1385.8,342.4 1386.2,333.0 1386.8,333.2 1387.2,339.1 1387.8,340.6 1387.8,422.3 1387.2,427.6 1386.8,428.6 1386.2,435.6 1385.8,427.6 1385.2,426.7 1384.8,431.0 1384.2,423.6 1383.8,429.8 1383.2,423.6 1382.8,426.0 1382.2,432.2 1381.8,423.6 1381.2,430.4 1380.8,422.2 1380.2,427.6 1379.8,432.0 1379.2,426.8 1378.8,424.7 1378.2,431.1 1377.8,435.6 1377.2,433.3 1376.8,429.3 1376.2,431.8 1375.8,421.8 1375.2,432.2 1374.8,426.2 1374.2,426.6 1373.8,422.9 1373.2,424.0 1372.8,422.8 1372.2,433.7 1371.8,432.1 1371.2,430.4 1370.8,431.9 1370.2,422.6 1369.8,430.0 1369.2,424.9 1368.8,423.5 1368.2,422.3 1367.8,422.4 1367.2,422.8 1366.8,421.8 1366.2,425.3 1365.8,422.1 1365.2,433.9 1364.8,425.9 1364.2,432.1 1363.8,422.3 1363.2,428.1 1362.8,430.4 1362.2,426.8 1361.8,426.2 1361.2,424.6 1360.8,434.7 1360.2,426.3 1359.8,409.3 1359.2,429.6 1358.8,426.9 1358.2,434.3 1357.8,413.6 1357.2,421.8 1356.8,425.4 1356.2,423.4 1355.8,433.8 1355.2,424.2 1354.8,428.5 1354.2,429.6 1353.8,429.8 1353.2,429.6 1352.8,431.0 1352.2,423.1 1351.8,426.6 1351.2,424.1 1350.8,423.4 1350.2,434.6 1349.8,426.4 1349.2,417.9 1348.8,424.3 1348.2,427.2 1347.8,427.9 1347.2,429.8 1346.8,424.9 1346.2,422.3 1345.8,425.9 1345.2,425.9 1344.8,432.0 1344.2,424.0 1343.8,423.5 1343.2,428.4 1342.8,425.8 1342.2,423.6 1341.8,424.5 1341.2,429.2 1340.8,424.6 1340.2,435.0 1339.8,429.1 1339.2,434.8 1338.8,427.9 1338.2,412.2 1337.8,430.3 1337.2,422.2 1336.8,430.6 1336.2,426.9 1335.8,424.1 1335.2,422.4 1334.8,423.9 1334.2,431.1 1333.8,423.3 1333.2,433.2 1332.8,422.0 1332.2,424.5 1331.8,424.1 1331.2,435.0 1330.8,427.4 1330.2,425.1 1329.8,428.1 1329.2,422.2 1328.8,423.6 1328.2,435.4 1327.8,426.8 1327.2,427.7 1326.8,426.6 1326.2,424.5 1325.8,423.7 1325.2,434.5 1324.8,422.2 1324.2,428.5 1323.8,423.0 1323.2,421.9 1322.8,425.5 1322.2,432.1 1321.8,425.5 1321.2,430.4 1320.8,408.1 1320.2,424.0 1319.8,421.9 1319.2,430.3 1318.8,429.9 1318.2,422.8 1317.8,429.5 1317.2,431.6 1316.8,421.8 1316.2,425.2 1315.8,435.5 1315.2,435.7 1314.8,423.8 1314.2,433.2 1313.8,422.5 1313.2,421.9 1312.8,423.8 1312.2,434.0 1311.8,423.8 1311.2,423.4 1310.8,432.2 1310.2,424.7 1309.8,426.3 1309.2,431.0 1308.8,430.2 1308.2,426.4 1307.8,427.2 1307.2,431.9 1306.8,430.0 1306.2,426.3 1305.8,423.2 1305.2,424.5 1304.8,434.6 1304.2,434.9 1303.8,429.4 1303.2,429.9 1302.8,422.1 1302.2,426.8 1301.8,432.5 1301.2,430.6 1300.8,430.1 1300.2,423.9 1299.8,434.0 1299.2,428.9 1298.8,425.9 1298.2,422.4 1297.8,431.0Z"/><rect x="1390.4" y="309.3" width="42.6" height="147.4" rx="3.5" fill="#d1d6e6"/><path clip-path="url(#c13)" fill="#4662d2" d="M1390.5,363.4 1391.0,363.9 1391.5,363.2 1392.0,363.6 1392.5,363.6 1393.0,363.4 1393.5,363.9 1394.0,363.6 1394.5,363.2 1395.0,363.4 1395.5,363.6 1396.0,363.8 1396.5,363.2 1397.0,363.9 1397.5,363.3 1398.0,363.0 1398.5,363.3 1399.0,363.3 1399.5,364.0 1400.0,375.5 1400.5,375.8 1401.0,375.8 1401.5,363.6 1402.0,363.6 1402.5,363.6 1403.0,363.5 1403.5,363.7 1404.0,363.4 1404.5,363.2 1405.0,363.0 1405.5,363.1 1406.0,363.0 1406.5,363.7 1407.0,363.4 1407.5,363.7 1408.0,363.8 1408.5,363.8 1409.0,363.7 1409.5,363.2 1410.0,363.8 1410.5,363.7 1412.3,369.8 1413.0,382.8 1412.3,395.8 1410.5,402.4 1410.0,402.4 1409.5,403.2 1409.0,403.0 1408.5,402.4 1408.0,403.0 1407.5,402.5 1407.0,403.2 1406.5,403.0 1406.0,402.4 1405.5,402.6 1405.0,403.0 1404.5,402.6 1404.0,402.5 1403.5,403.2 1403.0,402.3 1402.5,402.6 1402.0,402.8 1401.5,402.3 1401.0,402.5 1400.5,402.8 1400.0,403.1 1399.5,402.4 1399.0,403.0 1398.5,402.2 1398.0,402.4 1397.5,402.9 1397.0,403.0 1396.5,403.1 1396.0,402.5 1395.5,402.8 1395.0,403.0 1394.5,402.5 1394.0,402.7 1393.5,402.2 1393.0,402.3 1392.5,402.5 1392.0,403.1 1391.5,402.7 1391.0,403.0 1390.5,402.6Z"/></svg><div class="t" style="left:56.8px;top:316.58px;font-size:9px;line-height:9px;font-weight:700;color:#2a2d38;letter-spacing:0.05px;font-style:normal;width:87.4px;overflow:hidden;">INTRO</div><div class="t" style="left:151.10000000000002px;top:316.58px;font-size:9px;line-height:9px;font-weight:700;color:#2a2d38;letter-spacing:0.05px;font-style:normal;width:84.7px;overflow:hidden;">INTRO</div><div class="t" style="left:242.8px;top:316.58px;font-size:9px;line-height:9px;font-weight:700;color:#2a2d38;letter-spacing:0.05px;font-style:normal;width:108.4px;overflow:hidden;">VERSE</div><div class="t" style="left:358.3px;top:316.58px;font-size:9px;line-height:9px;font-weight:700;color:#2a2d38;letter-spacing:0.05px;font-style:normal;width:154.8px;overflow:hidden;">CHORUS</div><div class="t" style="left:520.0px;top:316.58px;font-size:9px;line-height:9px;font-weight:700;color:#2a2d38;letter-spacing:0.05px;font-style:normal;width:131.3px;overflow:hidden;">CHORUS</div><div class="t" style="left:658.1999999999999px;top:316.58px;font-size:9px;line-height:9px;font-weight:700;color:#2a2d38;letter-spacing:0.05px;font-style:normal;width:73.6px;overflow:hidden;">INSTRUMENTAL</div><div class="t" style="left:738.5999999999999px;top:316.58px;font-size:9px;line-height:9px;font-weight:700;color:#2a2d38;letter-spacing:0.05px;font-style:normal;width:96.8px;overflow:hidden;">INSTRUMENTAL</div><div class="t" style="left:842.5px;top:316.58px;font-size:9px;line-height:9px;font-weight:700;color:#2a2d38;letter-spacing:0.05px;font-style:normal;width:84.1px;overflow:hidden;">CHORUS</div><div class="t" style="left:934.8px;top:316.58px;font-size:9px;line-height:9px;font-weight:700;color:#2a2d38;letter-spacing:0.05px;font-style:normal;width:84.4px;overflow:hidden;">CHORUS</div><div class="t" style="left:1026.8px;top:316.58px;font-size:9px;line-height:9px;font-weight:700;color:#2a2d38;letter-spacing:0.05px;font-style:normal;width:84.7px;overflow:hidden;">CHORUS</div><div class="t" style="left:1119.2px;top:316.58px;font-size:9px;line-height:9px;font-weight:700;color:#2a2d38;letter-spacing:0.05px;font-style:normal;width:84.9px;overflow:hidden;">CHORUS</div><div class="t" style="left:1211.6px;top:316.58px;font-size:9px;line-height:9px;font-weight:700;color:#2a2d38;letter-spacing:0.05px;font-style:normal;width:84.1px;overflow:hidden;">CHORUS</div><div class="t" style="left:1303.3px;top:316.58px;font-size:9px;line-height:9px;font-weight:700;color:#2a2d38;letter-spacing:0.05px;font-style:normal;width:85.4px;overflow:hidden;">CHORUS</div><div class="t" style="left:1396.2px;top:316.58px;font-size:9px;line-height:9px;font-weight:700;color:#2a2d38;letter-spacing:0.05px;font-style:normal;width:37.6px;overflow:hidden;">OUTRO</div><div style="position:absolute;left:50px;top:290px;width:2.2px;height:167px;background:#fff"></div><svg style="position:absolute;left:44px;top:277px" width="15" height="19" viewBox="0 0 15 19">
<path fill="#fff" d="M1 1.6 Q1 0.4 2.2 0.4 H12.6 Q13.8 0.4 13.8 1.6 V11.5 L7.4 17.8 L1 11.5 Z"/></svg><div style="position:absolute;left:50px;top:474px;width:1386px;height:166px;background:#1c1d21"></div><div class="t" style="left:242px;width:1000px;text-align:center;top:523.96px;font-size:16px;line-height:16px;font-weight:700;color:#e2e2e4;letter-spacing:0.4px;">Your adaptations will appear here.</div><div class="t m" style="left:242px;width:1000px;text-align:center;top:549.15px;font-size:14px;line-height:14px;font-weight:400;color:#c3c4c7;letter-spacing:0.75px;">They're stored only during this session, so download any you want to keep.</div><div class="t m" style="left:242px;width:1000px;text-align:center;top:573.15px;font-size:14px;line-height:14px;font-weight:400;color:#c3c4c7;letter-spacing:0.77px;">If you adapt music for a track more than once, additional adaptations are applied to the original track.</div><div style="position:absolute;left:163px;top:630px;width:1160px;height:355px;background:#2b2c31;border-radius:7px;box-shadow:0 0 0 1.5px rgba(10,11,13,0.55)"></div><svg style="position:absolute;left:176px;top:643px" width="28" height="28" viewBox="0 0 28 28">
<path fill="#fff" d="M8.3 5 Q8.7 7.9 11.6 8.3 Q8.7 8.7 8.3 11.6 Q7.9 8.7 5 8.3 Q7.9 7.9 8.3 5 Z"/>
<path fill="#fff" d="M20.7 16.2 Q21 18.1 22.9 18.4 Q21 18.7 20.7 20.6 Q20.4 18.7 18.5 18.4 Q20.4 18.1 20.7 16.2 Z"/>
<path fill="none" stroke="#fff" stroke-width="1.8" d="M14.9 18.5 V6.1 H20.2 V10.1 H14.9"/>
<circle cx="11.6" cy="18.7" r="2.7" fill="none" stroke="#fff" stroke-width="1.7"/></svg><div class="t m" style="left:209.5px;top:648.61px;font-size:17px;line-height:17px;font-weight:400;color:#f2f2f4;letter-spacing:0.45px;font-style:normal;">Adapt music</div><svg style="position:absolute;left:1280px;top:644px" width="26" height="26" viewBox="0 0 26 26">
<path fill="none" stroke="#f4f4f4" stroke-width="2" d="M5.6 6.3 L20.9 20.7 M20.9 6.3 L5.6 20.7"/></svg><div class="t m" style="left:180px;top:678.35px;font-size:14px;line-height:14px;font-weight:400;color:#d0d1d4;letter-spacing:0.78px;font-style:normal;">Choose one or more presets and stems to adapt. You can also describe how you want the music to sound.</div><div class="t m" style="left:180px;top:702.15px;font-size:14px;line-height:14px;font-weight:400;color:#d0d1d4;letter-spacing:0.78px;font-style:normal;">Adaptations are always applied to the original track. <span style="text-decoration:underline;text-underline-offset:2px">Read our guide to prompting</span>.</div><div class="t m" style="left:759.6px;top:747.34px;font-size:12px;line-height:12px;font-weight:400;color:#a6a7ac;letter-spacing:1.45px;font-style:normal;">INSTRUMENT</div><div style="position:absolute;left:380px;top:777px;width:102.5px;height:30.5px;border-radius:16px;background:#404148"></div><div style="position:absolute;left:383px;top:780px;width:25px;height:25px;border-radius:50%;background:linear-gradient(180deg,#9a7df6,#36a6f6)"></div><div class="t" style="left:417px;top:785.64px;font-size:14.6px;line-height:14.6px;font-weight:700;color:#f2f2f3;letter-spacing:-0.1px;font-style:normal;">Dreamy</div><div style="position:absolute;left:492.7px;top:777px;width:103.90000000000003px;height:30.5px;border-radius:16px;background:#404148"></div><div style="position:absolute;left:495.7px;top:780px;width:25px;height:25px;border-radius:50%;background:linear-gradient(180deg,#4a87f2,#93bf93)"></div><div class="t" style="left:530.2px;top:785.64px;font-size:14.6px;line-height:14.6px;font-weight:700;color:#f2f2f3;letter-spacing:-0.1px;font-style:normal;">Hopeful</div><div style="position:absolute;left:606.7px;top:777px;width:93.29999999999995px;height:30.5px;border-radius:16px;background:#404148"></div><div style="position:absolute;left:609.7px;top:780px;width:25px;height:25px;border-radius:50%;background:linear-gradient(180deg,#fbcf46,#ef7ee8)"></div><div class="t" style="left:644px;top:785.64px;font-size:14.6px;line-height:14.6px;font-weight:700;color:#f2f2f3;letter-spacing:-0.1px;font-style:normal;">Happy</div><div style="position:absolute;left:300px;top:817px;width:104.39999999999998px;height:30.5px;border-radius:16px;background:#404148"></div><div style="position:absolute;left:303px;top:820px;width:25px;height:25px;border-radius:50%;background:linear-gradient(180deg,#333,#333)"></div><div class="t" style="left:360.3px;top:825.64px;font-size:14.6px;line-height:14.6px;font-weight:700;color:#f2f2f3;letter-spacing:-0.1px;font-style:normal;">Dark</div><div style="position:absolute;left:415.9px;top:817px;width:113.5px;height:30.5px;border-radius:16px;background:#404148"></div><div style="position:absolute;left:418.9px;top:820px;width:25px;height:25px;border-radius:50%;background:linear-gradient(180deg,#f4175f,#f9c1cf)"></div><div class="t" style="left:452px;top:825.64px;font-size:14.6px;line-height:14.6px;font-weight:700;color:#f2f2f3;letter-spacing:-0.1px;font-style:normal;">Romantic</div><div style="position:absolute;left:539.3px;top:817px;width:109.40000000000009px;height:30.5px;border-radius:16px;background:#404148"></div><div style="position:absolute;left:542.3px;top:820px;width:25px;height:25px;border-radius:50%;background:linear-gradient(180deg,#20a03a,#b5e8aa)"></div><div class="t" style="left:576.4px;top:825.64px;font-size:14.6px;line-height:14.6px;font-weight:700;color:#f2f2f3;letter-spacing:-0.1px;font-style:normal;">Relaxing</div><div style="position:absolute;left:300px;top:857px;width:96.39999999999998px;height:30.5px;border-radius:16px;background:#404148"></div><div style="position:absolute;left:303px;top:860px;width:25px;height:25px;border-radius:50%;background:linear-gradient(180deg,#333,#333)"></div><div class="t" style="left:346.4px;top:865.64px;font-size:14.6px;line-height:14.6px;font-weight:700;color:#f2f2f3;letter-spacing:-0.1px;font-style:normal;">Epics</div><div style="position:absolute;left:406.7px;top:857px;width:75.69999999999999px;height:30.5px;border-radius:16px;background:#404148"></div><div style="position:absolute;left:409.7px;top:860px;width:25px;height:25px;border-radius:50%;background:linear-gradient(180deg,#2c4fc8,#c349d9)"></div><div class="t" style="left:443.4px;top:865.64px;font-size:14.6px;line-height:14.6px;font-weight:700;color:#f2f2f3;letter-spacing:-0.1px;font-style:normal;">Sad</div><div style="position:absolute;left:491.6px;top:857px;width:118.79999999999995px;height:30.5px;border-radius:16px;background:#404148"></div><div style="position:absolute;left:494.6px;top:860px;width:25px;height:25px;border-radius:50%;background:linear-gradient(180deg,#cf3b2c,#fbd2ca)"></div><div class="t" style="left:528.7px;top:865.64px;font-size:14.6px;line-height:14.6px;font-weight:700;color:#f2f2f3;letter-spacing:-0.1px;font-style:normal;">Suspense</div><div style="position:absolute;left:760.3px;top:777px;width:99.10000000000002px;height:30.5px;border-radius:16px;background:#404148"></div><div style="position:absolute;left:763.3px;top:780px;width:25px;height:25px;border-radius:50%;background:#e9e5d7"></div><div class="t" style="left:797px;top:785.64px;font-size:14.6px;line-height:14.6px;font-weight:700;color:#f2f2f3;letter-spacing:-0.1px;font-style:normal;">Strings</div><div style="position:absolute;left:868.7px;top:777px;width:148.0px;height:30.5px;border-radius:16px;background:#404148"></div><div style="position:absolute;left:871.7px;top:780px;width:25px;height:25px;border-radius:50%;background:#e9e5d7"></div><div class="t" style="left:906.6px;top:785.64px;font-size:14.6px;line-height:14.6px;font-weight:700;color:#f2f2f3;letter-spacing:-0.1px;font-style:normal;">Electric guitar</div><div style="position:absolute;left:1025.3px;top:777px;width:127.29999999999995px;height:30.5px;border-radius:16px;background:#404148"></div><div style="position:absolute;left:1028.3px;top:780px;width:25px;height:25px;border-radius:50%;background:#e9e5d7"></div><div class="t" style="left:1063px;top:785.64px;font-size:14.6px;line-height:14.6px;font-weight:700;color:#f2f2f3;letter-spacing:-0.1px;font-style:normal;">Percussion</div><div style="position:absolute;left:1162.3px;top:777px;width:90.70000000000005px;height:30.5px;border-radius:16px;background:#404148"></div><div style="position:absolute;left:1165.3px;top:780px;width:25px;height:25px;border-radius:50%;background:#e9e5d7"></div><div class="t" style="left:1200px;top:785.64px;font-size:14.6px;line-height:14.6px;font-weight:700;color:#f2f2f3;letter-spacing:-0.1px;font-style:normal;">Synth</div><div style="position:absolute;left:760.3px;top:817px;width:88.70000000000005px;height:30.5px;border-radius:16px;background:#404148"></div><div style="position:absolute;left:763.3px;top:820px;width:25px;height:25px;border-radius:50%;background:#e9e5d7"></div><div class="t" style="left:797px;top:825.64px;font-size:14.6px;line-height:14.6px;font-weight:700;color:#f2f2f3;letter-spacing:-0.1px;font-style:normal;">Brass</div><div style="position:absolute;left:856.7px;top:817px;width:90.09999999999991px;height:30.5px;border-radius:16px;background:#404148"></div><div style="position:absolute;left:859.7px;top:820px;width:25px;height:25px;border-radius:50%;background:#e9e5d7"></div><div class="t" style="left:895px;top:825.64px;font-size:14.6px;line-height:14.6px;font-weight:700;color:#f2f2f3;letter-spacing:-0.1px;font-style:normal;">Piano</div><div style="position:absolute;left:955.8px;top:817px;width:85.0px;height:30.5px;border-radius:16px;background:#404148"></div><div style="position:absolute;left:958.8px;top:820px;width:25px;height:25px;border-radius:50%;background:#e9e5d7"></div><div class="t" style="left:992.6px;top:825.64px;font-size:14.6px;line-height:14.6px;font-weight:700;color:#f2f2f3;letter-spacing:-0.1px;font-style:normal;">Flute</div><div style="position:absolute;left:163px;top:911px;width:1160px;height:1.5px;background:#3b3c42"></div><div style="position:absolute;left:412.5px;top:912px;width:1.2px;height:73px;background:#3b3c42"></div><div style="position:absolute;left:180px;top:715px;width:200px;height:213px;background:#45464d;box-shadow:0 2px 6px rgba(0,0,0,0.35)"></div><div style="position:absolute;left:196.2px;top:729.8px;width:25px;height:24px;background:#2aa9f6"></div><div style="position:absolute;left:201.2px;top:740.5999999999999px;width:15px;height:2.6px;background:#0c2850"></div><div class="t m" style="left:230px;top:734.10px;font-size:15px;line-height:15px;font-weight:400;color:#f0f0f2;letter-spacing:0.1px;font-style:normal;">Full mix</div><svg style="position:absolute;left:213px;top:769.8px" width="25" height="24" viewBox="0 0 25 24"><rect width="25" height="24" fill="#2aa9f6"/><path fill="none" stroke="#0c2850" stroke-width="2.3" d="M4.5 12.5 L8.8 16.2 L18.9 6.4"/></svg><div class="t m" style="left:246.3px;top:774.10px;font-size:15px;line-height:15px;font-weight:400;color:#f0f0f2;letter-spacing:0.4px;font-style:normal;">Melody</div><svg style="position:absolute;left:213px;top:809.5px" width="25" height="24" viewBox="0 0 25 24"><rect width="25" height="24" fill="#2aa9f6"/><path fill="none" stroke="#0c2850" stroke-width="2.3" d="M4.5 12.5 L8.8 16.2 L18.9 6.4"/></svg><div class="t m" style="left:246.3px;top:813.80px;font-size:15px;line-height:15px;font-weight:400;color:#f0f0f2;letter-spacing:0.42px;font-style:normal;">Instruments</div><div style="position:absolute;left:213px;top:849.5px;width:21px;height:20px;border:2px solid #9fa0a6"></div><div class="t m" style="left:246.3px;top:853.50px;font-size:15px;line-height:15px;font-weight:400;color:#f0f0f2;letter-spacing:0.35px;font-style:normal;">Bass</div><div style="position:absolute;left:213px;top:889px;width:21px;height:20px;border:2px solid #9fa0a6"></div><div class="t m" style="left:246.3px;top:893.30px;font-size:15px;line-height:15px;font-weight:400;color:#f0f0f2;letter-spacing:0.35px;font-style:normal;">Drums</div><div style="position:absolute;left:180px;top:933px;width:216px;height:31px;background:#3e3f46"></div><svg style="position:absolute;left:188px;top:936px" width="28" height="28" viewBox="0 0 28 28">
<path fill="none" stroke="#f2f2f2" stroke-width="1.9" d="M16 4.2 V20.7 M9.2 7.3 H13.2 M16.9 7.3 H22.3 M5.5 12.4 H13.2 M16.9 12.4 H19.2 M9.2 17.2 H13.2 M16.9 17.2 H22.8"/></svg><div class="t" style="left:221.6px;top:940.90px;font-size:15px;line-height:15px;font-weight:700;color:#f2f2f3;letter-spacing:-0.1px;font-style:normal;">Instruments, Melody</div><svg style="position:absolute;left:373px;top:943px" width="12" height="12" viewBox="0 0 12 12">
<path fill="#f2f2f2" d="M2 8.8 L6 3.2 L10 8.8 Z"/></svg><div class="t m" style="left:432px;top:940.21px;font-size:17px;line-height:17px;font-weight:400;color:#b6b7bb;letter-spacing:0.45px;font-style:italic;">Describe how you want the music to sound</div><div style="position:absolute;left:1260px;top:926.5px;width:45.5px;height:45px;border-radius:50%;background:#45464d"></div><svg style="position:absolute;left:1268px;top:934px" width="30" height="30" viewBox="0 0 30 30">
<path fill="none" stroke="#8c8d93" stroke-width="1.6" d="M14.8 8 V23 M9 13.6 L14.8 7.8 L20.6 13.6"/></svg><div style="position:absolute;left:0;top:1000.6px;width:1482px;height:1.3px;background:linear-gradient(90deg,#8c8c8e 0px,#8c8c8e 217px,#4a4a4c 217px,#4a4a4c 307px,#26272a 307px,#26272a 1180px,#4a4a4c 1180px,#4a4a4c 1393px,#858587 1393px,#858587 1482px)"></div>
</body></html>
